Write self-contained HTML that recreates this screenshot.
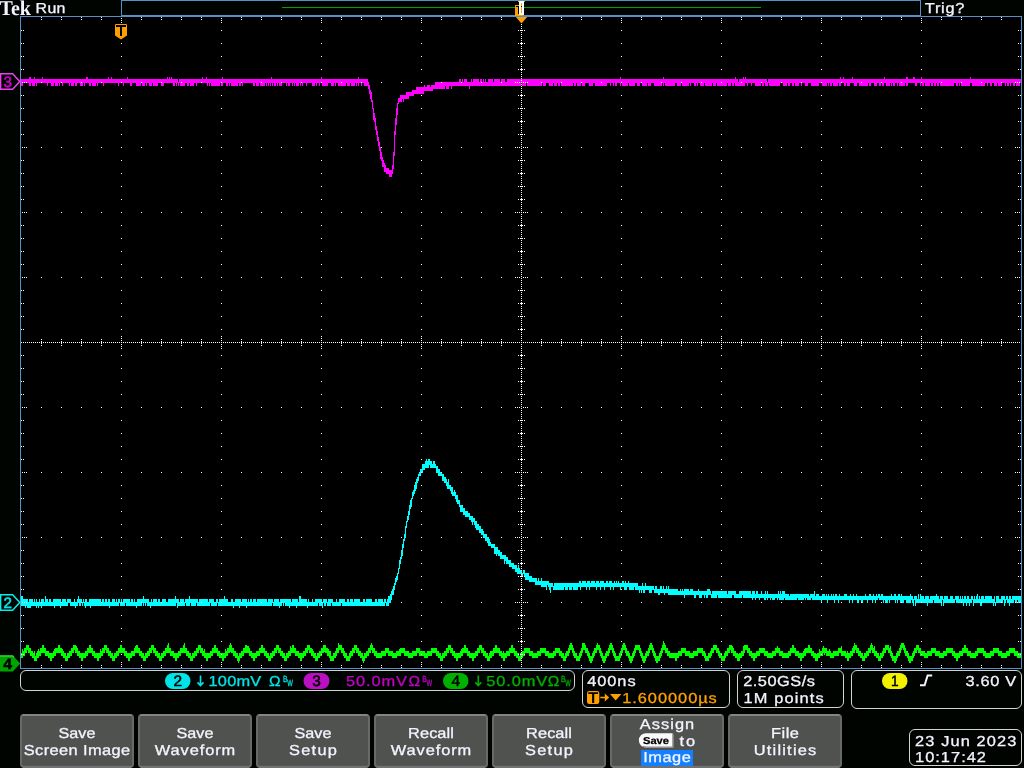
<!DOCTYPE html>
<html><head><meta charset="utf-8"><title>Tek</title>
<style>
html,body{margin:0;padding:0;background:#000400;}
body{width:1024px;height:768px;overflow:hidden;position:relative;font-family:"Liberation Sans",sans-serif;}
</style></head><body>
<svg width="1024" height="768" viewBox="0 0 1024 768" shape-rendering="crispEdges" style="position:absolute;left:0;top:0;will-change:transform"><rect x="20" y="16" width="1002" height="653" fill="#000"/><rect x="121" y="0" width="800" height="16" fill="#000400"/><path d="M21 653h1v5h-1zM22 649h1v9h-1zM23 651h1v5h-1zM24 648h1v8h-1zM25 648h1v5h-1zM26 645h1v8h-1zM27 645h1v5h-1zM28 645h1v8h-1zM29 648h1v5h-1zM30 648h1v8h-1zM31 651h1v5h-1zM32 651h1v7h-1zM33 653h1v5h-1zM34 651h1v10h-1zM35 656h1v5h-1zM36 653h1v8h-1zM37 651h1v7h-1zM38 649h1v9h-1zM39 651h1v5h-1zM40 648h1v8h-1zM41 648h1v5h-1zM42 645h2v8h-2zM44 648h1v5h-1zM45 648h1v8h-1zM46 651h2v5h-2zM48 651h1v7h-1zM49 653h1v5h-1zM50 653h2v8h-2zM52 653h1v5h-1zM53 651h1v7h-1zM54 649h1v7h-1zM55 648h1v8h-1zM56 648h2v5h-2zM58 645h2v8h-2zM60 648h1v5h-1zM61 648h1v8h-1zM62 649h1v7h-1zM63 651h1v7h-1zM64 653h1v5h-1zM65 653h1v8h-1zM66 656h1v5h-1zM67 653h1v8h-1zM68 653h1v5h-1zM69 651h1v7h-1zM70 651h1v5h-1zM71 648h1v8h-1zM72 648h1v5h-1zM73 645h1v8h-1zM74 645h1v5h-1zM75 645h1v8h-1zM76 646h1v7h-1zM77 648h1v8h-1zM78 651h1v5h-1zM79 651h1v7h-1zM80 653h1v5h-1zM81 653h2v8h-2zM83 653h2v5h-2zM85 651h1v7h-1zM86 651h1v5h-1zM87 648h1v8h-1zM88 648h1v5h-1zM89 645h2v8h-2zM91 648h1v5h-1zM92 648h1v8h-1zM93 651h1v5h-1zM94 651h1v7h-1zM95 653h2v5h-2zM97 653h2v8h-2zM99 653h1v5h-1zM100 649h1v9h-1zM101 651h1v5h-1zM102 648h1v8h-1zM103 648h1v5h-1zM104 645h1v8h-1zM105 645h1v5h-1zM106 645h1v8h-1zM107 648h1v5h-1zM108 648h1v8h-1zM109 651h1v5h-1zM110 651h1v7h-1zM111 653h1v5h-1zM112 653h1v8h-1zM113 656h1v5h-1zM114 653h1v8h-1zM115 653h1v5h-1zM116 651h1v7h-1zM117 651h1v5h-1zM118 648h1v8h-1zM119 648h1v5h-1zM120 645h2v8h-2zM122 648h2v5h-2zM124 648h1v8h-1zM125 651h1v5h-1zM126 651h1v7h-1zM127 653h1v5h-1zM128 653h2v8h-2zM130 653h1v5h-1zM131 651h1v7h-1zM132 651h2v5h-2zM134 648h1v8h-1zM135 646h1v7h-1zM136 645h2v8h-2zM138 648h1v5h-1zM139 648h1v8h-1zM140 651h1v5h-1zM141 651h1v7h-1zM142 653h1v5h-1zM143 653h1v8h-1zM144 656h1v5h-1zM145 653h1v8h-1zM146 653h1v5h-1zM147 651h1v7h-1zM148 651h1v5h-1zM149 648h1v8h-1zM150 648h1v5h-1zM151 645h1v8h-1zM152 645h1v5h-1zM153 645h1v8h-1zM154 648h1v5h-1zM155 648h1v8h-1zM156 651h1v5h-1zM157 651h1v7h-1zM158 653h1v5h-1zM159 653h1v8h-1zM160 656h1v5h-1zM161 653h1v8h-1zM162 653h1v5h-1zM163 651h1v7h-1zM164 651h1v5h-1zM165 648h1v8h-1zM166 648h1v5h-1zM167 645h1v8h-1zM168 643h1v10h-1zM169 648h1v5h-1zM170 648h1v8h-1zM171 651h2v5h-2zM173 651h1v7h-1zM174 653h1v5h-1zM175 653h2v8h-2zM177 653h1v5h-1zM178 651h1v7h-1zM179 651h1v5h-1zM180 648h1v8h-1zM181 648h2v5h-2zM183 645h1v8h-1zM184 643h1v10h-1zM185 648h1v5h-1zM186 648h1v8h-1zM187 651h1v5h-1zM188 651h1v7h-1zM189 653h1v5h-1zM190 653h1v8h-1zM191 656h1v5h-1zM192 653h1v8h-1zM193 653h1v5h-1zM194 651h1v7h-1zM195 651h1v5h-1zM196 648h1v8h-1zM197 648h1v5h-1zM198 645h1v8h-1zM199 645h1v5h-1zM200 645h1v8h-1zM201 648h1v5h-1zM202 648h1v8h-1zM203 651h1v5h-1zM204 649h1v9h-1zM205 653h1v5h-1zM206 653h2v8h-2zM208 653h2v5h-2zM210 651h1v7h-1zM211 651h1v5h-1zM212 648h1v8h-1zM213 648h1v5h-1zM214 645h2v8h-2zM216 648h1v5h-1zM217 648h1v8h-1zM218 651h1v5h-1zM219 651h1v7h-1zM220 653h2v5h-2zM222 653h2v8h-2zM224 653h1v5h-1zM225 649h1v9h-1zM226 651h1v5h-1zM227 648h1v8h-1zM228 648h1v5h-1zM229 645h1v8h-1zM230 643h1v9h-1zM231 645h1v8h-1zM232 648h1v5h-1zM233 648h1v8h-1zM234 651h1v5h-1zM235 651h1v7h-1zM236 653h1v5h-1zM237 653h1v8h-1zM238 656h1v7h-1zM239 653h1v8h-1zM240 653h1v5h-1zM241 651h1v7h-1zM242 651h1v5h-1zM243 648h1v8h-1zM244 648h1v5h-1zM245 645h2v8h-2zM247 646h2v7h-2zM249 648h1v8h-1zM250 651h1v5h-1zM251 651h1v7h-1zM252 653h1v5h-1zM253 653h2v8h-2zM255 653h1v5h-1zM256 651h1v7h-1zM257 651h2v5h-2zM259 648h1v8h-1zM260 648h1v5h-1zM261 645h2v8h-2zM263 648h1v5h-1zM264 648h1v8h-1zM265 651h1v5h-1zM266 651h1v7h-1zM267 653h1v5h-1zM268 653h1v8h-1zM269 656h1v5h-1zM270 653h1v8h-1zM271 653h1v5h-1zM272 651h1v7h-1zM273 651h1v5h-1zM274 648h1v8h-1zM275 648h1v5h-1zM276 645h1v8h-1zM277 645h1v5h-1zM278 645h1v8h-1zM279 648h1v5h-1zM280 648h1v8h-1zM281 651h1v5h-1zM282 651h1v7h-1zM283 653h1v5h-1zM284 653h1v8h-1zM285 656h1v5h-1zM286 653h1v8h-1zM287 653h1v5h-1zM288 651h1v7h-1zM289 651h1v5h-1zM290 646h1v10h-1zM291 648h1v5h-1zM292 645h2v8h-2zM294 648h1v5h-1zM295 648h1v8h-1zM296 651h2v5h-2zM298 651h1v7h-1zM299 653h1v5h-1zM300 653h2v8h-2zM302 653h1v5h-1zM303 651h1v7h-1zM304 651h1v5h-1zM305 648h1v8h-1zM306 648h1v5h-1zM307 645h1v8h-1zM308 645h1v5h-1zM309 645h1v8h-1zM310 648h1v5h-1zM311 648h1v8h-1zM312 649h1v7h-1zM313 651h1v7h-1zM314 653h1v5h-1zM315 653h1v8h-1zM316 656h1v5h-1zM317 653h1v8h-1zM318 653h1v5h-1zM319 651h1v7h-1zM320 651h1v5h-1zM321 648h1v8h-1zM322 648h1v5h-1zM323 645h1v8h-1zM324 645h1v7h-1zM325 645h1v8h-1zM326 648h1v5h-1zM327 648h1v8h-1zM328 649h1v7h-1zM329 651h1v7h-1zM330 651h1v10h-1zM331 656h2v5h-2zM333 653h1v8h-1zM334 653h1v5h-1zM335 651h1v7h-1zM336 648h1v8h-1zM337 648h1v5h-1zM338 643h1v10h-1zM339 645h2v5h-2zM341 645h1v8h-1zM342 648h1v5h-1zM343 648h1v8h-1zM344 651h1v7h-1zM345 653h1v5h-1zM346 653h1v8h-1zM347 656h2v5h-2zM349 653h1v8h-1zM350 651h1v7h-1zM351 651h1v5h-1zM352 648h1v8h-1zM353 648h1v5h-1zM354 645h1v8h-1zM355 645h1v5h-1zM356 645h1v8h-1zM357 648h1v5h-1zM358 648h1v8h-1zM359 651h1v5h-1zM360 651h1v7h-1zM361 653h1v5h-1zM362 653h1v8h-1zM363 656h1v7h-1zM364 653h1v8h-1zM365 653h1v5h-1zM366 651h1v7h-1zM367 651h1v5h-1zM368 648h1v8h-1zM369 648h1v5h-1zM370 645h1v8h-1zM371 643h1v7h-1zM372 645h1v8h-1zM373 648h1v5h-1zM374 648h1v8h-1zM375 651h1v5h-1zM376 651h1v7h-1zM377 653h4v5h-4zM381 651h1v7h-1zM382 651h3v5h-3zM385 648h1v8h-1zM386 648h2v5h-2zM388 648h1v8h-1zM389 651h3v5h-3zM392 651h1v7h-1zM393 653h3v5h-3zM396 651h1v7h-1zM397 651h2v5h-2zM399 649h1v7h-1zM400 648h1v8h-1zM401 648h3v5h-3zM404 648h1v8h-1zM405 651h3v5h-3zM408 651h1v7h-1zM409 653h3v5h-3zM412 651h1v7h-1zM413 651h3v5h-3zM416 648h1v8h-1zM417 648h2v5h-2zM419 648h1v8h-1zM420 651h4v5h-4zM424 651h1v7h-1zM425 653h2v5h-2zM427 651h1v7h-1zM428 651h3v5h-3zM431 648h1v8h-1zM432 648h4v5h-4zM436 648h1v8h-1zM437 651h1v5h-1zM438 651h1v7h-1zM439 653h1v5h-1zM440 653h1v8h-1zM441 656h1v5h-1zM442 653h1v8h-1zM443 653h1v5h-1zM444 651h1v7h-1zM445 651h1v5h-1zM446 648h1v8h-1zM447 648h1v5h-1zM448 645h1v8h-1zM449 645h1v5h-1zM450 645h1v8h-1zM451 648h1v5h-1zM452 648h1v8h-1zM453 651h1v5h-1zM454 651h1v7h-1zM455 653h1v5h-1zM456 653h2v8h-2zM458 653h2v5h-2zM460 651h1v7h-1zM461 649h1v7h-1zM462 648h1v8h-1zM463 648h1v5h-1zM464 645h2v8h-2zM466 648h1v5h-1zM467 648h1v8h-1zM468 651h1v5h-1zM469 651h1v7h-1zM470 653h2v5h-2zM472 653h2v8h-2zM474 653h1v5h-1zM475 651h1v7h-1zM476 651h1v5h-1zM477 648h1v8h-1zM478 648h1v5h-1zM479 645h1v8h-1zM480 645h1v5h-1zM481 645h1v8h-1zM482 648h1v5h-1zM483 648h1v8h-1zM484 651h1v5h-1zM485 651h1v7h-1zM486 653h1v5h-1zM487 653h1v8h-1zM488 656h1v5h-1zM489 653h1v8h-1zM490 651h2v7h-2zM492 651h1v5h-1zM493 648h1v8h-1zM494 648h1v5h-1zM495 645h2v8h-2zM497 648h2v5h-2zM499 648h1v8h-1zM500 651h1v5h-1zM501 651h1v7h-1zM502 653h1v5h-1zM503 651h1v10h-1zM504 653h1v8h-1zM505 653h1v5h-1zM506 651h1v7h-1zM507 651h2v5h-2zM509 648h1v8h-1zM510 648h1v5h-1zM511 645h2v8h-2zM513 648h1v5h-1zM514 648h1v8h-1zM515 651h1v5h-1zM516 651h1v7h-1zM517 653h1v5h-1zM518 653h1v8h-1zM519 656h1v5h-1zM520 653h1v8h-1zM521 653h1v5h-1zM522 651h1v7h-1zM523 651h1v5h-1zM524 648h1v8h-1zM525 648h4v5h-4zM529 648h1v8h-1zM530 651h2v5h-2zM532 651h1v7h-1zM533 653h4v5h-4zM537 651h1v7h-1zM538 651h2v5h-2zM540 648h1v8h-1zM541 648h4v5h-4zM545 648h1v8h-1zM546 651h2v5h-2zM548 651h1v7h-1zM549 653h4v5h-4zM553 651h1v7h-1zM554 651h1v5h-1zM555 648h1v8h-1zM556 648h3v5h-3zM559 648h1v8h-1zM560 651h1v5h-1zM561 651h1v7h-1zM562 653h1v5h-1zM563 653h1v8h-1zM564 656h1v5h-1zM565 653h1v8h-1zM566 651h1v7h-1zM567 651h1v5h-1zM568 648h1v8h-1zM569 645h1v8h-1zM570 643h2v7h-2zM572 645h1v8h-1zM573 648h1v8h-1zM574 651h1v7h-1zM575 653h1v5h-1zM576 653h1v8h-1zM577 656h2v5h-2zM579 653h1v8h-1zM580 651h1v7h-1zM581 648h1v8h-1zM582 643h1v10h-1zM583 643h2v7h-2zM585 645h1v8h-1zM586 648h1v5h-1zM587 648h1v8h-1zM588 651h1v7h-1zM589 653h1v8h-1zM590 656h2v7h-2zM592 653h1v8h-1zM593 651h1v7h-1zM594 648h1v8h-1zM595 648h1v5h-1zM596 645h1v8h-1zM597 643h1v7h-1zM598 645h1v5h-1zM599 645h1v8h-1zM600 648h1v8h-1zM601 651h1v7h-1zM602 653h1v8h-1zM603 656h2v7h-2zM605 653h1v8h-1zM606 651h1v7h-1zM607 651h1v5h-1zM608 648h1v8h-1zM609 645h1v8h-1zM610 643h2v7h-2zM612 645h1v8h-1zM613 648h1v8h-1zM614 651h1v7h-1zM615 653h1v8h-1zM616 656h3v5h-3zM619 653h1v8h-1zM620 651h1v7h-1zM621 648h1v8h-1zM622 645h1v8h-1zM623 643h2v7h-2zM625 645h1v8h-1zM626 648h1v8h-1zM627 651h1v5h-1zM628 651h1v7h-1zM629 653h1v8h-1zM630 656h2v7h-2zM632 653h1v8h-1zM633 651h1v7h-1zM634 648h1v8h-1zM635 645h1v8h-1zM636 645h3v5h-3zM639 645h1v8h-1zM640 648h1v8h-1zM641 651h1v7h-1zM642 653h1v8h-1zM643 656h2v7h-2zM645 653h1v8h-1zM646 651h1v7h-1zM647 651h1v5h-1zM648 648h1v8h-1zM649 645h1v8h-1zM650 643h2v7h-2zM652 645h1v8h-1zM653 648h1v8h-1zM654 651h1v7h-1zM655 653h1v8h-1zM656 656h2v7h-2zM658 656h1v5h-1zM659 653h1v8h-1zM660 651h1v7h-1zM661 648h1v8h-1zM662 645h1v8h-1zM663 641h1v9h-1zM664 643h1v7h-1zM665 645h1v8h-1zM666 648h1v5h-1zM667 648h1v8h-1zM668 651h1v5h-1zM669 651h1v7h-1zM670 653h5v5h-5zM675 653h2v8h-2zM677 653h1v5h-1zM678 651h1v7h-1zM679 651h2v5h-2zM681 648h1v8h-1zM682 648h3v5h-3zM685 648h1v8h-1zM686 651h3v5h-3zM689 651h1v7h-1zM690 653h3v5h-3zM693 651h1v7h-1zM694 651h3v5h-3zM697 648h1v8h-1zM698 648h4v5h-4zM702 648h1v8h-1zM703 651h1v5h-1zM704 651h1v7h-1zM705 653h1v8h-1zM706 656h2v5h-2zM708 653h1v8h-1zM709 653h1v5h-1zM710 651h1v7h-1zM711 648h1v8h-1zM712 648h1v5h-1zM713 645h1v8h-1zM714 645h2v5h-2zM716 645h1v8h-1zM717 648h1v5h-1zM718 648h1v8h-1zM719 651h1v7h-1zM720 653h1v5h-1zM721 653h1v8h-1zM722 656h2v5h-2zM724 653h1v8h-1zM725 651h1v7h-1zM726 651h1v5h-1zM727 648h1v8h-1zM728 648h1v5h-1zM729 645h1v8h-1zM730 645h1v5h-1zM731 645h1v8h-1zM732 646h1v7h-1zM733 648h1v8h-1zM734 651h1v5h-1zM735 651h1v7h-1zM736 653h1v5h-1zM737 653h1v8h-1zM738 654h1v7h-1zM739 653h1v8h-1zM740 653h1v5h-1zM741 651h1v7h-1zM742 651h1v5h-1zM743 646h1v10h-1zM744 645h1v8h-1zM745 645h2v5h-2zM747 645h1v8h-1zM748 648h1v5h-1zM749 648h1v8h-1zM750 651h1v5h-1zM751 651h1v7h-1zM752 653h1v5h-1zM753 653h2v8h-2zM755 653h1v5h-1zM756 651h1v7h-1zM757 651h2v5h-2zM759 648h1v8h-1zM760 648h4v5h-4zM764 648h1v8h-1zM765 651h2v5h-2zM767 651h1v7h-1zM768 653h4v5h-4zM772 651h1v7h-1zM773 651h2v5h-2zM775 648h1v8h-1zM776 648h1v5h-1zM777 646h1v7h-1zM778 648h1v5h-1zM779 648h1v8h-1zM780 651h2v5h-2zM782 651h1v7h-1zM783 653h5v5h-5zM788 651h1v7h-1zM789 651h1v5h-1zM790 648h1v8h-1zM791 648h1v5h-1zM792 645h2v8h-2zM794 648h1v5h-1zM795 648h1v8h-1zM796 651h2v5h-2zM798 651h1v7h-1zM799 653h1v5h-1zM800 653h2v8h-2zM802 653h1v5h-1zM803 651h1v7h-1zM804 649h1v7h-1zM805 648h1v8h-1zM806 648h2v5h-2zM808 645h2v8h-2zM810 648h1v5h-1zM811 648h1v8h-1zM812 651h1v5h-1zM813 651h1v7h-1zM814 653h1v5h-1zM815 653h1v8h-1zM816 654h1v7h-1zM817 653h1v8h-1zM818 653h1v5h-1zM819 649h1v9h-1zM820 651h2v5h-2zM822 648h1v8h-1zM823 646h1v7h-1zM824 648h1v7h-1zM825 648h1v5h-1zM826 648h1v8h-1zM827 651h2v5h-2zM829 649h1v7h-1zM830 651h1v7h-1zM831 653h2v5h-2zM833 651h1v7h-1zM834 651h4v5h-4zM838 648h1v8h-1zM839 648h2v5h-2zM841 646h1v10h-1zM842 651h3v5h-3zM845 651h1v7h-1zM846 653h1v5h-1zM847 651h1v10h-1zM848 653h1v8h-1zM849 653h1v5h-1zM850 651h1v7h-1zM851 651h1v5h-1zM852 648h1v8h-1zM853 646h1v7h-1zM854 643h1v10h-1zM855 645h1v5h-1zM856 645h1v8h-1zM857 648h1v5h-1zM858 648h1v8h-1zM859 651h1v5h-1zM860 651h1v7h-1zM861 653h1v5h-1zM862 653h1v8h-1zM863 656h1v5h-1zM864 653h1v8h-1zM865 653h1v5h-1zM866 651h1v7h-1zM867 651h1v5h-1zM868 648h1v8h-1zM869 648h1v5h-1zM870 645h1v8h-1zM871 643h1v7h-1zM872 645h1v8h-1zM873 648h1v5h-1zM874 646h1v10h-1zM875 651h1v5h-1zM876 651h1v7h-1zM877 653h1v5h-1zM878 653h1v8h-1zM879 656h1v5h-1zM880 653h1v8h-1zM881 653h1v5h-1zM882 651h1v7h-1zM883 648h1v8h-1zM884 648h1v5h-1zM885 645h1v8h-1zM886 645h2v5h-2zM888 645h1v8h-1zM889 648h1v5h-1zM890 646h1v10h-1zM891 651h1v7h-1zM892 653h1v8h-1zM893 656h1v5h-1zM894 656h2v7h-2zM896 653h1v8h-1zM897 651h1v7h-1zM898 651h1v5h-1zM899 648h1v8h-1zM900 645h1v8h-1zM901 643h1v7h-1zM902 643h1v5h-1zM903 643h1v7h-1zM904 645h1v8h-1zM905 648h1v8h-1zM906 651h1v5h-1zM907 651h1v7h-1zM908 653h1v8h-1zM909 656h2v7h-2zM911 656h1v5h-1zM912 653h1v8h-1zM913 651h1v7h-1zM914 648h1v8h-1zM915 648h1v5h-1zM916 645h1v8h-1zM917 645h1v5h-1zM918 645h1v8h-1zM919 648h1v5h-1zM920 648h1v8h-1zM921 651h3v5h-3zM924 651h1v7h-1zM925 653h2v5h-2zM927 651h1v7h-1zM928 651h3v5h-3zM931 648h1v8h-1zM932 648h3v5h-3zM935 648h1v8h-1zM936 651h3v5h-3zM939 651h1v7h-1zM940 653h3v5h-3zM943 651h1v7h-1zM944 651h2v5h-2zM946 648h1v8h-1zM947 648h5v5h-5zM952 648h1v8h-1zM953 651h1v5h-1zM954 651h1v7h-1zM955 653h1v5h-1zM956 653h2v8h-2zM958 653h1v5h-1zM959 651h1v7h-1zM960 651h2v5h-2zM962 648h1v8h-1zM963 648h1v5h-1zM964 645h2v8h-2zM966 648h1v5h-1zM967 648h1v8h-1zM968 651h2v5h-2zM970 651h1v7h-1zM971 653h4v5h-4zM975 651h1v7h-1zM976 651h1v5h-1zM977 648h1v8h-1zM978 648h5v5h-5zM983 648h1v8h-1zM984 651h1v5h-1zM985 651h1v7h-1zM986 653h4v5h-4zM990 651h1v7h-1zM991 651h2v5h-2zM993 648h1v8h-1zM994 648h4v5h-4zM998 648h1v8h-1zM999 651h2v5h-2zM1001 651h1v7h-1zM1002 653h4v5h-4zM1006 651h1v7h-1zM1007 651h2v5h-2zM1009 648h1v8h-1zM1010 648h4v5h-4zM1014 648h1v8h-1zM1015 651h2v5h-2zM1017 651h1v7h-1zM1018 653h3v5h-3z" fill="#00ff00"/><path d="M21 596h2v10h-2zM23 599h2v7h-2zM25 599h1v9h-1zM26 599h1v7h-1zM27 599h1v9h-1zM28 602h1v6h-1zM29 599h2v9h-2zM31 599h2v7h-2zM33 602h1v4h-1zM34 599h1v7h-1zM35 602h1v4h-1zM36 599h1v9h-1zM37 602h1v4h-1zM38 602h1v6h-1zM39 599h1v7h-1zM40 602h1v4h-1zM41 599h1v9h-1zM42 599h2v7h-2zM44 602h1v4h-1zM45 596h1v10h-1zM46 599h2v7h-2zM48 602h1v4h-1zM49 599h2v7h-2zM51 602h2v4h-2zM53 599h1v7h-1zM54 599h1v9h-1zM55 599h5v7h-5zM60 599h1v9h-1zM61 602h1v4h-1zM62 599h4v7h-4zM66 602h1v4h-1zM67 599h1v7h-1zM68 599h2v4h-2zM70 599h1v7h-1zM71 602h3v4h-3zM74 599h1v7h-1zM75 602h1v6h-1zM76 602h1v4h-1zM77 599h1v7h-1zM78 596h1v7h-1zM79 599h2v7h-2zM81 599h1v4h-1zM82 602h1v4h-1zM83 599h1v4h-1zM84 602h1v4h-1zM85 599h1v9h-1zM86 599h1v7h-1zM87 602h2v4h-2zM89 599h1v7h-1zM90 599h1v9h-1zM91 599h10v7h-10zM101 602h1v4h-1zM102 599h2v7h-2zM104 602h1v4h-1zM105 599h2v7h-2zM107 602h1v4h-1zM108 599h1v7h-1zM109 599h1v9h-1zM110 602h2v4h-2zM112 599h3v7h-3zM115 602h1v4h-1zM116 599h1v7h-1zM117 602h1v4h-1zM118 599h1v7h-1zM119 599h1v4h-1zM120 602h1v4h-1zM121 599h1v7h-1zM122 602h1v4h-1zM123 599h2v7h-2zM125 599h1v4h-1zM126 599h4v7h-4zM130 602h1v4h-1zM131 599h2v7h-2zM133 602h1v4h-1zM134 599h1v7h-1zM135 602h1v4h-1zM136 602h1v6h-1zM137 599h5v7h-5zM142 599h1v4h-1zM143 596h1v10h-1zM144 599h1v4h-1zM145 599h1v7h-1zM146 599h1v4h-1zM147 599h2v7h-2zM149 602h1v4h-1zM150 602h1v6h-1zM151 599h1v7h-1zM152 602h1v4h-1zM153 599h4v7h-4zM157 602h1v4h-1zM158 599h2v7h-2zM160 602h2v4h-2zM162 599h4v7h-4zM166 602h2v4h-2zM168 599h7v7h-7zM175 596h1v10h-1zM176 599h1v4h-1zM177 599h1v9h-1zM178 599h1v7h-1zM179 602h1v4h-1zM180 599h4v7h-4zM184 602h1v4h-1zM185 599h1v4h-1zM186 599h3v7h-3zM189 596h1v10h-1zM190 599h1v4h-1zM191 599h5v7h-5zM196 599h1v4h-1zM197 599h1v7h-1zM198 602h1v4h-1zM199 599h9v7h-9zM208 602h1v4h-1zM209 599h1v7h-1zM210 599h1v4h-1zM211 599h3v7h-3zM214 602h2v4h-2zM216 599h1v7h-1zM217 599h1v4h-1zM218 602h1v4h-1zM219 599h5v7h-5zM224 596h1v10h-1zM225 599h3v7h-3zM228 602h3v4h-3zM231 599h2v7h-2zM233 602h1v6h-1zM234 602h1v4h-1zM235 599h4v7h-4zM239 599h1v9h-1zM240 599h1v7h-1zM241 602h1v4h-1zM242 599h4v7h-4zM246 599h1v9h-1zM247 602h1v4h-1zM248 599h1v7h-1zM249 602h1v4h-1zM250 599h2v7h-2zM252 602h1v4h-1zM253 599h3v7h-3zM256 602h1v4h-1zM257 599h10v7h-10zM267 602h1v4h-1zM268 599h4v7h-4zM272 599h1v4h-1zM273 602h1v4h-1zM274 599h5v7h-5zM279 602h1v6h-1zM280 599h2v7h-2zM282 599h1v4h-1zM283 599h1v7h-1zM284 599h1v4h-1zM285 599h4v7h-4zM289 599h1v9h-1zM290 599h1v7h-1zM291 602h1v4h-1zM292 599h4v7h-4zM296 599h1v9h-1zM297 599h1v7h-1zM298 602h1v4h-1zM299 596h2v10h-2zM301 599h6v7h-6zM307 602h1v6h-1zM308 599h1v7h-1zM309 602h3v4h-3zM312 599h1v7h-1zM313 602h2v4h-2zM315 599h3v7h-3zM318 599h1v4h-1zM319 599h3v7h-3zM322 602h1v6h-1zM323 599h1v4h-1zM324 599h2v7h-2zM326 599h1v4h-1zM327 602h1v4h-1zM328 599h3v7h-3zM331 599h1v4h-1zM332 599h1v7h-1zM333 602h3v4h-3zM336 599h1v7h-1zM337 602h2v4h-2zM339 599h2v7h-2zM341 599h1v4h-1zM342 599h3v7h-3zM345 602h2v4h-2zM347 599h2v7h-2zM349 602h1v4h-1zM350 599h3v7h-3zM353 602h1v4h-1zM354 599h6v7h-6zM360 602h3v4h-3zM363 599h2v7h-2zM365 602h1v4h-1zM366 599h6v7h-6zM372 602h3v4h-3zM375 599h2v7h-2zM377 602h1v4h-1zM378 599h5v7h-5zM383 602h1v4h-1zM384 599h1v7h-1zM385 599h1v4h-1zM386 602h1v4h-1zM387 599h1v7h-1zM388 596h1v10h-1zM389 596h1v7h-1zM390 594h1v9h-1zM391 591h1v9h-1zM392 589h1v6h-1zM393 586h1v9h-1zM394 583h1v7h-1zM395 578h1v7h-1zM396 576h1v6h-1zM397 573h1v7h-1zM398 568h1v6h-1zM399 560h1v9h-1zM400 557h1v7h-1zM401 550h1v9h-1zM402 544h1v12h-1zM403 539h1v9h-1zM404 534h1v7h-1zM405 526h1v12h-1zM406 521h1v7h-1zM407 516h1v6h-1zM408 511h1v9h-1zM409 505h1v10h-1zM410 500h1v9h-1zM411 498h1v9h-1zM412 492h1v7h-1zM413 490h1v6h-1zM414 485h1v9h-1zM415 482h1v9h-1zM416 479h1v10h-1zM417 477h1v6h-1zM418 474h1v7h-1zM419 472h1v4h-1zM420 469h1v7h-1zM421 469h1v4h-1zM422 464h1v9h-1zM423 464h2v6h-2zM425 461h1v7h-1zM426 459h1v9h-1zM427 461h1v7h-1zM428 459h1v9h-1zM429 459h1v6h-1zM430 461h2v7h-2zM432 464h1v4h-1zM433 461h2v7h-2zM435 464h1v4h-1zM436 466h2v7h-2zM438 469h2v7h-2zM440 472h2v4h-2zM442 474h2v7h-2zM444 477h2v6h-2zM446 479h1v7h-1zM447 482h1v7h-1zM448 479h1v10h-1zM449 485h1v4h-1zM450 485h1v6h-1zM451 487h1v7h-1zM452 487h1v9h-1zM453 492h1v4h-1zM454 490h1v6h-1zM455 492h1v7h-1zM456 495h1v7h-1zM457 495h1v9h-1zM458 500h1v4h-1zM459 500h1v7h-1zM460 505h3v7h-3zM463 508h2v7h-2zM465 511h3v6h-3zM468 513h1v4h-1zM469 513h1v7h-1zM470 516h1v4h-1zM471 516h1v6h-1zM472 516h1v9h-1zM473 518h1v4h-1zM474 518h1v7h-1zM475 521h1v7h-1zM476 521h1v9h-1zM477 524h2v6h-2zM479 526h2v7h-2zM481 529h2v6h-2zM483 531h1v7h-1zM484 534h1v4h-1zM485 534h2v7h-2zM487 537h1v6h-1zM488 537h1v9h-1zM489 539h1v7h-1zM490 542h1v4h-1zM491 544h3v4h-3zM494 544h1v10h-1zM495 547h1v7h-1zM496 547h1v9h-1zM497 547h1v7h-1zM498 550h2v6h-2zM500 552h2v7h-2zM502 555h2v4h-2zM504 555h1v9h-1zM505 555h1v6h-1zM506 557h2v7h-2zM508 560h1v4h-1zM509 560h2v7h-2zM511 563h1v4h-1zM512 563h2v6h-2zM514 565h1v4h-1zM515 565h2v7h-2zM517 568h1v6h-1zM518 565h1v9h-1zM519 568h1v6h-1zM520 570h1v4h-1zM521 570h1v7h-1zM522 573h1v4h-1zM523 570h1v4h-1zM524 570h1v7h-1zM525 573h4v7h-4zM529 576h3v6h-3zM532 578h3v4h-3zM535 578h2v7h-2zM537 581h1v4h-1zM538 578h1v7h-1zM539 581h2v4h-2zM541 578h1v9h-1zM542 581h4v6h-4zM546 581h1v9h-1zM547 581h1v4h-1zM548 581h1v6h-1zM549 583h1v7h-1zM550 583h1v10h-1zM551 583h2v4h-2zM553 586h1v4h-1zM554 583h10v7h-10zM564 583h1v4h-1zM565 583h3v7h-3zM568 583h1v4h-1zM569 583h3v7h-3zM572 583h1v4h-1zM573 583h5v7h-5zM578 583h1v4h-1zM579 581h1v6h-1zM580 581h1v9h-1zM581 583h1v4h-1zM582 581h4v6h-4zM586 583h1v7h-1zM587 581h2v6h-2zM589 581h1v9h-1zM590 583h1v4h-1zM591 581h4v6h-4zM595 583h1v4h-1zM596 581h1v9h-1zM597 581h2v6h-2zM599 583h1v4h-1zM600 581h1v9h-1zM601 581h3v6h-3zM604 583h1v7h-1zM605 583h1v4h-1zM606 581h2v6h-2zM608 583h1v4h-1zM609 581h1v6h-1zM610 581h1v9h-1zM611 581h1v6h-1zM612 583h1v4h-1zM613 583h1v7h-1zM614 581h1v6h-1zM615 583h1v4h-1zM616 581h1v6h-1zM617 583h1v4h-1zM618 581h1v6h-1zM619 583h1v4h-1zM620 583h1v7h-1zM621 583h1v4h-1zM622 581h2v6h-2zM624 583h1v7h-1zM625 581h1v9h-1zM626 583h1v7h-1zM627 583h1v4h-1zM628 581h1v6h-1zM629 583h5v7h-5zM634 583h1v4h-1zM635 583h3v7h-3zM638 586h1v4h-1zM639 586h1v7h-1zM640 586h1v4h-1zM641 586h1v7h-1zM642 583h1v7h-1zM643 586h2v7h-2zM645 583h1v7h-1zM646 586h3v4h-3zM649 586h3v7h-3zM652 586h2v4h-2zM654 589h1v4h-1zM655 586h2v7h-2zM657 589h1v4h-1zM658 589h2v6h-2zM660 586h2v7h-2zM662 589h1v4h-1zM663 586h1v7h-1zM664 589h1v6h-1zM665 589h1v4h-1zM666 586h1v7h-1zM667 589h1v4h-1zM668 586h1v9h-1zM669 589h9v6h-9zM678 591h2v4h-2zM680 589h1v6h-1zM681 591h1v4h-1zM682 589h1v6h-1zM683 591h1v4h-1zM684 589h1v9h-1zM685 589h4v6h-4zM689 591h1v4h-1zM690 589h3v6h-3zM693 591h1v4h-1zM694 591h2v7h-2zM696 591h2v4h-2zM698 589h1v6h-1zM699 591h3v7h-3zM702 591h2v4h-2zM704 591h1v7h-1zM705 591h1v4h-1zM706 591h1v7h-1zM707 589h1v9h-1zM708 589h2v6h-2zM710 591h1v4h-1zM711 594h1v4h-1zM712 591h5v7h-5zM717 591h1v4h-1zM718 591h9v7h-9zM727 594h1v4h-1zM728 591h4v7h-4zM732 591h2v4h-2zM734 591h2v7h-2zM736 594h3v4h-3zM739 591h3v7h-3zM742 591h1v4h-1zM743 591h8v7h-8zM751 594h1v4h-1zM752 591h1v9h-1zM753 591h2v7h-2zM755 594h1v6h-1zM756 591h2v7h-2zM758 594h1v4h-1zM759 594h1v6h-1zM760 594h1v4h-1zM761 591h1v7h-1zM762 594h2v4h-2zM764 594h1v6h-1zM765 591h1v9h-1zM766 594h1v4h-1zM767 591h1v9h-1zM768 594h2v4h-2zM770 594h1v6h-1zM771 594h1v4h-1zM772 594h3v6h-3zM775 594h2v4h-2zM777 594h1v6h-1zM778 591h1v7h-1zM779 594h1v6h-1zM780 591h1v9h-1zM781 594h1v6h-1zM782 591h2v9h-2zM784 591h1v7h-1zM785 594h4v6h-4zM789 596h1v4h-1zM790 594h7v6h-7zM797 594h1v4h-1zM798 594h6v6h-6zM804 594h1v4h-1zM805 594h1v6h-1zM806 594h1v4h-1zM807 594h2v6h-2zM809 596h1v4h-1zM810 594h1v6h-1zM811 594h1v4h-1zM812 594h2v6h-2zM814 591h1v9h-1zM815 596h1v4h-1zM816 594h3v6h-3zM819 596h2v4h-2zM821 596h1v7h-1zM822 594h3v6h-3zM825 596h1v4h-1zM826 594h1v6h-1zM827 596h1v7h-1zM828 594h1v6h-1zM829 596h2v4h-2zM831 594h1v6h-1zM832 596h1v4h-1zM833 594h1v6h-1zM834 596h1v7h-1zM835 594h2v6h-2zM837 596h1v4h-1zM838 596h1v7h-1zM839 594h1v6h-1zM840 596h4v4h-4zM844 594h3v6h-3zM847 596h2v4h-2zM849 596h1v7h-1zM850 594h1v6h-1zM851 596h1v4h-1zM852 596h1v7h-1zM853 594h1v6h-1zM854 596h2v4h-2zM856 594h1v6h-1zM857 596h2v7h-2zM859 596h2v4h-2zM861 596h2v7h-2zM863 596h2v4h-2zM865 594h1v6h-1zM866 596h1v4h-1zM867 596h1v7h-1zM868 596h1v4h-1zM869 594h2v6h-2zM871 596h1v4h-1zM872 596h1v7h-1zM873 594h1v6h-1zM874 596h1v4h-1zM875 596h1v7h-1zM876 594h1v6h-1zM877 596h1v4h-1zM878 594h1v4h-1zM879 594h1v6h-1zM880 596h1v4h-1zM881 594h2v6h-2zM883 596h1v7h-1zM884 596h1v4h-1zM885 596h3v7h-3zM888 596h1v4h-1zM889 596h1v7h-1zM890 596h1v4h-1zM891 594h1v6h-1zM892 596h2v4h-2zM894 594h1v6h-1zM895 594h1v9h-1zM896 596h1v4h-1zM897 596h1v7h-1zM898 594h2v6h-2zM900 596h1v7h-1zM901 594h1v9h-1zM902 596h2v7h-2zM904 596h2v4h-2zM906 596h4v7h-4zM910 594h1v9h-1zM911 596h1v4h-1zM912 596h1v7h-1zM913 599h1v7h-1zM914 596h1v4h-1zM915 596h1v10h-1zM916 596h1v7h-1zM917 599h1v4h-1zM918 594h1v9h-1zM919 599h1v4h-1zM920 594h1v9h-1zM921 596h3v7h-3zM924 599h1v4h-1zM925 596h2v7h-2zM927 596h1v10h-1zM928 596h1v7h-1zM929 599h1v4h-1zM930 596h3v7h-3zM933 596h1v4h-1zM934 596h2v7h-2zM936 594h1v9h-1zM937 596h2v7h-2zM939 599h1v4h-1zM940 596h1v7h-1zM941 596h1v10h-1zM942 596h1v4h-1zM943 599h1v7h-1zM944 596h4v7h-4zM948 599h2v4h-2zM950 596h3v7h-3zM953 599h2v4h-2zM955 596h1v4h-1zM956 596h3v7h-3zM959 599h1v4h-1zM960 596h1v7h-1zM961 599h1v4h-1zM962 596h1v7h-1zM963 599h1v7h-1zM964 596h2v7h-2zM966 599h1v7h-1zM967 596h2v7h-2zM969 599h1v7h-1zM970 599h1v4h-1zM971 596h1v7h-1zM972 596h1v4h-1zM973 599h1v7h-1zM974 596h1v7h-1zM975 599h1v4h-1zM976 596h1v7h-1zM977 594h1v9h-1zM978 599h1v4h-1zM979 596h1v7h-1zM980 599h1v7h-1zM981 596h1v10h-1zM982 596h2v7h-2zM984 599h1v4h-1zM985 596h7v7h-7zM992 599h1v4h-1zM993 599h1v7h-1zM994 596h1v7h-1zM995 602h1v4h-1zM996 596h3v7h-3zM999 599h2v4h-2zM1001 596h2v7h-2zM1003 596h1v4h-1zM1004 596h1v10h-1zM1005 599h1v4h-1zM1006 596h1v4h-1zM1007 596h1v7h-1zM1008 599h1v4h-1zM1009 596h1v10h-1zM1010 596h1v7h-1zM1011 599h1v4h-1zM1012 596h2v7h-2zM1014 596h1v4h-1zM1015 596h2v7h-2zM1017 596h1v4h-1zM1018 596h3v7h-3z" fill="#00ffff"/><path d="M21 79h2v7h-2zM23 79h6v4h-6zM29 77h2v9h-2zM31 79h1v4h-1zM32 79h2v7h-2zM34 77h1v9h-1zM35 79h1v4h-1zM36 79h1v7h-1zM37 79h5v4h-5zM42 77h1v6h-1zM43 79h4v4h-4zM47 79h1v7h-1zM48 79h3v4h-3zM51 79h3v7h-3zM54 79h1v4h-1zM55 79h3v7h-3zM58 79h1v4h-1zM59 79h1v7h-1zM60 79h2v4h-2zM62 79h1v7h-1zM63 79h6v4h-6zM69 79h1v7h-1zM70 79h1v4h-1zM71 79h3v7h-3zM74 79h1v4h-1zM75 79h2v7h-2zM77 79h3v4h-3zM80 79h3v7h-3zM83 79h1v4h-1zM84 79h1v7h-1zM85 79h1v4h-1zM86 77h2v6h-2zM88 79h1v4h-1zM89 79h2v7h-2zM91 79h1v4h-1zM92 79h4v7h-4zM96 79h1v4h-1zM97 79h1v7h-1zM98 79h5v4h-5zM103 79h1v7h-1zM104 79h4v4h-4zM108 77h1v6h-1zM109 79h2v4h-2zM111 77h1v6h-1zM112 79h6v4h-6zM118 79h1v7h-1zM119 79h4v4h-4zM123 79h1v7h-1zM124 79h3v4h-3zM127 77h1v6h-1zM128 79h2v4h-2zM130 79h2v7h-2zM132 79h4v4h-4zM136 79h5v7h-5zM141 79h1v4h-1zM142 79h3v7h-3zM145 79h1v4h-1zM146 79h1v7h-1zM147 79h2v4h-2zM149 79h3v7h-3zM152 79h1v4h-1zM153 79h5v7h-5zM158 79h3v4h-3zM161 79h3v7h-3zM164 79h3v4h-3zM167 77h1v6h-1zM168 79h1v4h-1zM169 77h1v6h-1zM170 79h1v4h-1zM171 77h1v6h-1zM172 79h1v4h-1zM173 79h2v7h-2zM175 79h1v4h-1zM176 79h1v7h-1zM177 79h1v4h-1zM178 82h1v4h-1zM179 79h1v4h-1zM180 79h5v7h-5zM185 79h2v4h-2zM187 79h2v7h-2zM189 79h1v4h-1zM190 79h4v7h-4zM194 79h2v4h-2zM196 79h1v7h-1zM197 79h5v4h-5zM202 77h1v6h-1zM203 79h3v4h-3zM206 77h1v6h-1zM207 79h1v7h-1zM208 79h1v4h-1zM209 79h1v7h-1zM210 79h1v4h-1zM211 79h9v7h-9zM220 79h1v4h-1zM221 79h1v7h-1zM222 77h1v9h-1zM223 79h3v4h-3zM226 79h2v7h-2zM228 79h1v4h-1zM229 79h1v7h-1zM230 79h1v4h-1zM231 79h7v7h-7zM238 79h1v4h-1zM239 79h2v7h-2zM241 79h1v4h-1zM242 79h1v7h-1zM243 79h10v4h-10zM253 79h2v7h-2zM255 79h1v4h-1zM256 79h3v7h-3zM259 79h1v4h-1zM260 79h5v7h-5zM265 79h1v4h-1zM266 79h1v7h-1zM267 79h1v4h-1zM268 79h1v7h-1zM269 79h1v4h-1zM270 79h1v7h-1zM271 77h1v6h-1zM272 79h1v7h-1zM273 79h1v4h-1zM274 79h2v7h-2zM276 79h1v4h-1zM277 79h1v7h-1zM278 79h1v4h-1zM279 79h3v7h-3zM282 79h4v4h-4zM286 79h1v7h-1zM287 79h1v4h-1zM288 79h2v7h-2zM290 79h2v4h-2zM292 79h1v7h-1zM293 79h1v4h-1zM294 79h1v7h-1zM295 79h1v4h-1zM296 79h3v7h-3zM299 79h1v4h-1zM300 79h1v7h-1zM301 79h1v4h-1zM302 79h1v7h-1zM303 79h3v4h-3zM306 79h1v7h-1zM307 79h5v4h-5zM312 79h3v7h-3zM315 79h1v4h-1zM316 79h1v7h-1zM317 79h2v4h-2zM319 79h1v7h-1zM320 79h1v4h-1zM321 77h1v6h-1zM322 79h6v7h-6zM328 79h3v4h-3zM331 79h3v7h-3zM334 79h1v4h-1zM335 79h1v7h-1zM336 79h2v4h-2zM338 79h8v7h-8zM346 79h1v4h-1zM347 79h3v7h-3zM350 79h1v4h-1zM351 79h4v7h-4zM355 79h1v4h-1zM356 79h1v7h-1zM357 79h1v4h-1zM358 77h1v9h-1zM359 79h2v4h-2zM361 79h1v7h-1zM362 79h2v4h-2zM364 79h4v7h-4zM368 82h1v7h-1zM369 85h1v9h-1zM370 90h1v9h-1zM371 92h1v10h-1zM372 100h1v9h-1zM373 108h1v12h-1zM374 113h1v9h-1zM375 118h1v12h-1zM376 126h1v9h-1zM377 131h1v10h-1zM378 137h1v9h-1zM379 142h1v9h-1zM380 147h1v12h-1zM381 152h1v9h-1zM382 157h1v10h-1zM383 160h1v7h-1zM384 163h1v9h-1zM385 165h1v7h-1zM386 168h3v6h-3zM389 170h3v7h-3zM392 165h1v9h-1zM393 152h1v17h-1zM394 131h1v25h-1zM395 118h1v17h-1zM396 108h1v17h-1zM397 103h1v12h-1zM398 98h1v6h-1zM399 98h1v4h-1zM400 95h2v7h-2zM402 95h1v4h-1zM403 95h1v7h-1zM404 95h2v4h-2zM406 92h3v7h-3zM409 92h3v4h-3zM412 90h2v6h-2zM414 90h2v4h-2zM416 87h8v7h-8zM424 85h1v6h-1zM425 87h2v4h-2zM427 85h3v6h-3zM430 87h1v4h-1zM431 85h2v6h-2zM433 85h2v4h-2zM435 82h10v7h-10zM445 82h1v4h-1zM446 82h3v7h-3zM449 82h2v4h-2zM451 82h1v7h-1zM452 82h7v4h-7zM459 79h2v7h-2zM461 82h1v4h-1zM462 79h1v7h-1zM463 82h1v4h-1zM464 79h3v7h-3zM467 82h2v4h-2zM469 82h1v7h-1zM470 82h1v4h-1zM471 79h1v7h-1zM472 82h1v4h-1zM473 79h6v7h-6zM479 82h1v4h-1zM480 79h2v7h-2zM482 82h1v4h-1zM483 79h1v7h-1zM484 82h1v4h-1zM485 79h1v7h-1zM486 82h2v4h-2zM488 79h5v7h-5zM493 82h1v4h-1zM494 79h6v7h-6zM500 82h1v4h-1zM501 79h4v7h-4zM505 82h2v4h-2zM507 79h14v7h-14zM521 79h1v4h-1zM522 79h4v7h-4zM526 79h1v4h-1zM527 79h15v7h-15zM542 79h1v4h-1zM543 79h3v7h-3zM546 79h3v4h-3zM549 79h4v7h-4zM553 79h1v4h-1zM554 79h3v7h-3zM557 79h1v4h-1zM558 79h2v7h-2zM560 79h1v4h-1zM561 79h12v7h-12zM573 79h1v4h-1zM574 79h2v7h-2zM576 79h1v4h-1zM577 79h4v7h-4zM581 79h1v4h-1zM582 79h3v7h-3zM585 79h4v4h-4zM589 79h4v7h-4zM593 79h2v4h-2zM595 79h12v7h-12zM607 79h3v4h-3zM610 79h1v7h-1zM611 79h2v4h-2zM613 79h1v7h-1zM614 79h1v4h-1zM615 79h2v7h-2zM617 79h3v4h-3zM620 77h1v9h-1zM621 79h1v4h-1zM622 79h6v7h-6zM628 79h1v4h-1zM629 79h6v7h-6zM635 79h2v4h-2zM637 79h3v7h-3zM640 79h2v4h-2zM642 79h5v7h-5zM647 79h1v4h-1zM648 79h3v7h-3zM651 79h3v4h-3zM654 79h8v7h-8zM662 79h1v4h-1zM663 77h1v9h-1zM664 79h1v4h-1zM665 79h10v7h-10zM675 79h2v4h-2zM677 79h4v7h-4zM681 79h1v4h-1zM682 79h7v7h-7zM689 79h1v4h-1zM690 79h1v7h-1zM691 79h3v4h-3zM694 79h2v7h-2zM696 79h1v4h-1zM697 79h1v7h-1zM698 79h2v4h-2zM700 79h4v7h-4zM704 79h1v4h-1zM705 79h7v7h-7zM712 79h1v4h-1zM713 79h3v7h-3zM716 79h1v4h-1zM717 79h10v7h-10zM727 79h1v4h-1zM728 79h3v7h-3zM731 79h1v4h-1zM732 79h2v7h-2zM734 79h1v4h-1zM735 77h1v9h-1zM736 79h2v7h-2zM738 82h1v4h-1zM739 79h4v7h-4zM743 77h1v9h-1zM744 79h1v7h-1zM745 77h1v6h-1zM746 79h1v4h-1zM747 79h1v7h-1zM748 79h3v4h-3zM751 79h1v7h-1zM752 79h3v4h-3zM755 79h6v7h-6zM761 79h1v4h-1zM762 79h2v7h-2zM764 79h1v4h-1zM765 79h2v7h-2zM767 82h1v4h-1zM768 79h1v4h-1zM769 79h11v7h-11zM780 79h3v4h-3zM783 79h4v7h-4zM787 79h1v4h-1zM788 79h2v7h-2zM790 79h2v4h-2zM792 79h2v7h-2zM794 79h1v4h-1zM795 79h4v7h-4zM799 79h2v4h-2zM801 79h1v7h-1zM802 79h3v4h-3zM805 79h3v7h-3zM808 79h3v4h-3zM811 79h8v7h-8zM819 79h3v4h-3zM822 79h5v7h-5zM827 79h1v4h-1zM828 79h1v7h-1zM829 79h1v4h-1zM830 79h2v7h-2zM832 79h1v4h-1zM833 79h5v7h-5zM838 79h1v4h-1zM839 79h1v7h-1zM840 77h1v9h-1zM841 79h2v4h-2zM843 77h1v6h-1zM844 79h2v7h-2zM846 79h1v4h-1zM847 79h3v7h-3zM850 79h2v4h-2zM852 77h1v6h-1zM853 79h1v4h-1zM854 79h3v7h-3zM857 79h2v4h-2zM859 79h9v7h-9zM868 79h1v4h-1zM869 79h2v7h-2zM871 79h3v4h-3zM874 79h3v7h-3zM877 79h2v4h-2zM879 79h2v7h-2zM881 79h1v4h-1zM882 79h2v7h-2zM884 77h1v6h-1zM885 79h1v4h-1zM886 79h4v7h-4zM890 79h1v4h-1zM891 79h1v7h-1zM892 79h1v4h-1zM893 79h2v7h-2zM895 79h2v4h-2zM897 79h1v7h-1zM898 79h1v4h-1zM899 79h6v7h-6zM905 79h1v4h-1zM906 77h2v9h-2zM908 79h5v4h-5zM913 77h2v6h-2zM915 79h2v7h-2zM917 79h3v4h-3zM920 79h1v7h-1zM921 77h1v6h-1zM922 79h2v7h-2zM924 79h1v4h-1zM925 79h5v7h-5zM930 79h1v4h-1zM931 79h2v7h-2zM933 79h1v4h-1zM934 79h2v7h-2zM936 79h1v4h-1zM937 79h2v7h-2zM939 79h1v4h-1zM940 79h14v7h-14zM954 79h2v4h-2zM956 79h2v7h-2zM958 79h1v4h-1zM959 79h1v7h-1zM960 79h1v4h-1zM961 79h9v7h-9zM970 77h1v6h-1zM971 79h1v4h-1zM972 79h13v7h-13zM985 79h2v4h-2zM987 79h1v7h-1zM988 79h2v4h-2zM990 79h2v7h-2zM992 79h2v4h-2zM994 79h3v7h-3zM997 79h1v4h-1zM998 79h4v7h-4zM1002 79h3v4h-3zM1005 79h1v7h-1zM1006 79h1v4h-1zM1007 79h2v7h-2zM1009 79h1v4h-1zM1010 79h1v7h-1zM1011 79h2v4h-2zM1013 79h2v7h-2zM1015 79h1v4h-1zM1016 79h4v7h-4zM1020 79h1v4h-1z" fill="#ff00ff"/><path fill="#fff" d="M21 30h1v1h-1zM21 43h1v1h-1zM21 56h1v1h-1zM21 69h1v1h-1zM21 95h1v1h-1zM21 108h1v1h-1zM21 121h1v1h-1zM21 134h1v1h-1zM21 160h1v1h-1zM21 173h1v1h-1zM21 186h1v1h-1zM21 199h1v1h-1zM21 225h1v1h-1zM21 238h1v1h-1zM21 251h1v1h-1zM21 264h1v1h-1zM21 290h1v1h-1zM21 303h1v1h-1zM21 316h1v1h-1zM21 329h1v1h-1zM21 342h1v1h-1zM21 355h1v1h-1zM21 368h1v1h-1zM21 381h1v1h-1zM21 394h1v1h-1zM21 420h1v1h-1zM21 433h1v1h-1zM21 446h1v1h-1zM21 459h1v1h-1zM21 485h1v1h-1zM21 498h1v1h-1zM21 511h1v1h-1zM21 524h1v1h-1zM21 550h1v1h-1zM21 563h1v1h-1zM21 576h1v1h-1zM21 589h1v1h-1zM21 615h1v1h-1zM21 628h1v1h-1zM21 641h1v1h-1zM21 654h1v1h-1zM22 82h1v1h-1zM22 147h1v1h-1zM22 212h1v1h-1zM22 277h1v1h-1zM22 407h1v1h-1zM22 472h1v1h-1zM22 537h1v1h-1zM22 602h1v1h-1zM23 30h1v1h-1zM23 43h1v1h-1zM23 56h1v1h-1zM23 69h1v1h-1zM23 95h1v1h-1zM23 108h1v1h-1zM23 121h1v1h-1zM23 134h1v1h-1zM23 160h1v1h-1zM23 173h1v1h-1zM23 186h1v1h-1zM23 199h1v1h-1zM23 225h1v1h-1zM23 238h1v1h-1zM23 251h1v1h-1zM23 264h1v1h-1zM23 290h1v1h-1zM23 303h1v1h-1zM23 316h1v1h-1zM23 329h1v1h-1zM23 342h1v1h-1zM23 355h1v1h-1zM23 368h1v1h-1zM23 381h1v1h-1zM23 394h1v1h-1zM23 420h1v1h-1zM23 433h1v1h-1zM23 446h1v1h-1zM23 459h1v1h-1zM23 485h1v1h-1zM23 498h1v1h-1zM23 511h1v1h-1zM23 524h1v1h-1zM23 550h1v1h-1zM23 563h1v1h-1zM23 576h1v1h-1zM23 589h1v1h-1zM23 615h1v1h-1zM23 628h1v1h-1zM23 641h1v1h-1zM23 654h1v1h-1zM24 82h1v1h-1zM24 147h1v1h-1zM24 212h1v1h-1zM24 277h1v1h-1zM24 407h1v1h-1zM24 472h1v1h-1zM24 537h1v1h-1zM24 602h1v1h-1zM25 342h1v1h-1zM26 82h1v1h-1zM26 147h1v1h-1zM26 212h1v1h-1zM26 277h1v1h-1zM26 407h1v1h-1zM26 472h1v1h-1zM26 537h1v1h-1zM26 602h1v1h-1zM27 342h1v1h-1zM29 342h1v1h-1zM31 342h1v1h-1zM33 342h1v1h-1zM35 342h1v1h-1zM37 342h1v1h-1zM39 342h1v1h-1zM41 17h1v1h-1zM41 19h1v1h-1zM41 82h1v1h-1zM41 147h1v1h-1zM41 212h1v1h-1zM41 277h1v1h-1zM41 339h1v1h-1zM41 341h1v1h-1zM41 342h1v1h-1zM41 343h1v1h-1zM41 345h1v1h-1zM41 407h1v1h-1zM41 472h1v1h-1zM41 537h1v1h-1zM41 602h1v1h-1zM41 665h1v1h-1zM41 667h1v1h-1zM43 342h1v1h-1zM45 342h1v1h-1zM47 342h1v1h-1zM49 342h1v1h-1zM51 342h1v1h-1zM53 342h1v1h-1zM55 342h1v1h-1zM57 342h1v1h-1zM59 342h1v1h-1zM61 17h1v1h-1zM61 19h1v1h-1zM61 82h1v1h-1zM61 147h1v1h-1zM61 212h1v1h-1zM61 277h1v1h-1zM61 339h1v1h-1zM61 341h1v1h-1zM61 342h1v1h-1zM61 343h1v1h-1zM61 345h1v1h-1zM61 407h1v1h-1zM61 472h1v1h-1zM61 537h1v1h-1zM61 602h1v1h-1zM61 665h1v1h-1zM61 667h1v1h-1zM63 342h1v1h-1zM65 342h1v1h-1zM67 342h1v1h-1zM69 342h1v1h-1zM71 342h1v1h-1zM73 342h1v1h-1zM75 342h1v1h-1zM77 342h1v1h-1zM79 342h1v1h-1zM81 17h1v1h-1zM81 19h1v1h-1zM81 82h1v1h-1zM81 147h1v1h-1zM81 212h1v1h-1zM81 277h1v1h-1zM81 339h1v1h-1zM81 341h1v1h-1zM81 342h1v1h-1zM81 343h1v1h-1zM81 345h1v1h-1zM81 407h1v1h-1zM81 472h1v1h-1zM81 537h1v1h-1zM81 602h1v1h-1zM81 665h1v1h-1zM81 667h1v1h-1zM83 342h1v1h-1zM85 342h1v1h-1zM87 342h1v1h-1zM89 342h1v1h-1zM91 342h1v1h-1zM93 342h1v1h-1zM95 342h1v1h-1zM97 342h1v1h-1zM99 342h1v1h-1zM101 17h1v1h-1zM101 19h1v1h-1zM101 82h1v1h-1zM101 147h1v1h-1zM101 212h1v1h-1zM101 277h1v1h-1zM101 339h1v1h-1zM101 341h1v1h-1zM101 342h1v1h-1zM101 343h1v1h-1zM101 345h1v1h-1zM101 407h1v1h-1zM101 472h1v1h-1zM101 537h1v1h-1zM101 602h1v1h-1zM101 665h1v1h-1zM101 667h1v1h-1zM103 342h1v1h-1zM105 342h1v1h-1zM107 342h1v1h-1zM109 342h1v1h-1zM111 342h1v1h-1zM113 342h1v1h-1zM115 342h1v1h-1zM117 342h1v1h-1zM119 342h1v1h-1zM121 18h1v1h-1zM121 20h1v1h-1zM121 22h1v1h-1zM121 30h1v1h-1zM121 43h1v1h-1zM121 56h1v1h-1zM121 69h1v1h-1zM121 82h1v1h-1zM121 95h1v1h-1zM121 108h1v1h-1zM121 121h1v1h-1zM121 134h1v1h-1zM121 147h1v1h-1zM121 160h1v1h-1zM121 173h1v1h-1zM121 186h1v1h-1zM121 199h1v1h-1zM121 212h1v1h-1zM121 225h1v1h-1zM121 238h1v1h-1zM121 251h1v1h-1zM121 264h1v1h-1zM121 277h1v1h-1zM121 290h1v1h-1zM121 303h1v1h-1zM121 316h1v1h-1zM121 329h1v1h-1zM121 336h1v1h-1zM121 338h1v1h-1zM121 340h1v1h-1zM121 342h1v1h-1zM121 344h1v1h-1zM121 346h1v1h-1zM121 348h1v1h-1zM121 355h1v1h-1zM121 368h1v1h-1zM121 381h1v1h-1zM121 394h1v1h-1zM121 407h1v1h-1zM121 420h1v1h-1zM121 433h1v1h-1zM121 446h1v1h-1zM121 459h1v1h-1zM121 472h1v1h-1zM121 485h1v1h-1zM121 498h1v1h-1zM121 511h1v1h-1zM121 524h1v1h-1zM121 537h1v1h-1zM121 550h1v1h-1zM121 563h1v1h-1zM121 576h1v1h-1zM121 589h1v1h-1zM121 602h1v1h-1zM121 615h1v1h-1zM121 628h1v1h-1zM121 641h1v1h-1zM121 654h1v1h-1zM121 662h1v1h-1zM121 664h1v1h-1zM121 666h1v1h-1zM123 342h1v1h-1zM125 342h1v1h-1zM127 342h1v1h-1zM129 342h1v1h-1zM131 342h1v1h-1zM133 342h1v1h-1zM135 342h1v1h-1zM137 342h1v1h-1zM139 342h1v1h-1zM141 17h1v1h-1zM141 19h1v1h-1zM141 82h1v1h-1zM141 147h1v1h-1zM141 212h1v1h-1zM141 277h1v1h-1zM141 339h1v1h-1zM141 341h1v1h-1zM141 342h1v1h-1zM141 343h1v1h-1zM141 345h1v1h-1zM141 407h1v1h-1zM141 472h1v1h-1zM141 537h1v1h-1zM141 602h1v1h-1zM141 665h1v1h-1zM141 667h1v1h-1zM143 342h1v1h-1zM145 342h1v1h-1zM147 342h1v1h-1zM149 342h1v1h-1zM151 342h1v1h-1zM153 342h1v1h-1zM155 342h1v1h-1zM157 342h1v1h-1zM159 342h1v1h-1zM161 17h1v1h-1zM161 19h1v1h-1zM161 82h1v1h-1zM161 147h1v1h-1zM161 212h1v1h-1zM161 277h1v1h-1zM161 339h1v1h-1zM161 341h1v1h-1zM161 342h1v1h-1zM161 343h1v1h-1zM161 345h1v1h-1zM161 407h1v1h-1zM161 472h1v1h-1zM161 537h1v1h-1zM161 602h1v1h-1zM161 665h1v1h-1zM161 667h1v1h-1zM163 342h1v1h-1zM165 342h1v1h-1zM167 342h1v1h-1zM169 342h1v1h-1zM171 342h1v1h-1zM173 342h1v1h-1zM175 342h1v1h-1zM177 342h1v1h-1zM179 342h1v1h-1zM181 17h1v1h-1zM181 19h1v1h-1zM181 82h1v1h-1zM181 147h1v1h-1zM181 212h1v1h-1zM181 277h1v1h-1zM181 339h1v1h-1zM181 341h1v1h-1zM181 342h1v1h-1zM181 343h1v1h-1zM181 345h1v1h-1zM181 407h1v1h-1zM181 472h1v1h-1zM181 537h1v1h-1zM181 602h1v1h-1zM181 665h1v1h-1zM181 667h1v1h-1zM183 342h1v1h-1zM185 342h1v1h-1zM187 342h1v1h-1zM189 342h1v1h-1zM191 342h1v1h-1zM193 342h1v1h-1zM195 342h1v1h-1zM197 342h1v1h-1zM199 342h1v1h-1zM201 17h1v1h-1zM201 19h1v1h-1zM201 82h1v1h-1zM201 147h1v1h-1zM201 212h1v1h-1zM201 277h1v1h-1zM201 339h1v1h-1zM201 341h1v1h-1zM201 342h1v1h-1zM201 343h1v1h-1zM201 345h1v1h-1zM201 407h1v1h-1zM201 472h1v1h-1zM201 537h1v1h-1zM201 602h1v1h-1zM201 665h1v1h-1zM201 667h1v1h-1zM203 342h1v1h-1zM205 342h1v1h-1zM207 342h1v1h-1zM209 342h1v1h-1zM211 342h1v1h-1zM213 342h1v1h-1zM215 342h1v1h-1zM217 342h1v1h-1zM219 342h1v1h-1zM221 18h1v1h-1zM221 20h1v1h-1zM221 22h1v1h-1zM221 30h1v1h-1zM221 43h1v1h-1zM221 56h1v1h-1zM221 69h1v1h-1zM221 82h1v1h-1zM221 95h1v1h-1zM221 108h1v1h-1zM221 121h1v1h-1zM221 134h1v1h-1zM221 147h1v1h-1zM221 160h1v1h-1zM221 173h1v1h-1zM221 186h1v1h-1zM221 199h1v1h-1zM221 212h1v1h-1zM221 225h1v1h-1zM221 238h1v1h-1zM221 251h1v1h-1zM221 264h1v1h-1zM221 277h1v1h-1zM221 290h1v1h-1zM221 303h1v1h-1zM221 316h1v1h-1zM221 329h1v1h-1zM221 336h1v1h-1zM221 338h1v1h-1zM221 340h1v1h-1zM221 342h1v1h-1zM221 344h1v1h-1zM221 346h1v1h-1zM221 348h1v1h-1zM221 355h1v1h-1zM221 368h1v1h-1zM221 381h1v1h-1zM221 394h1v1h-1zM221 407h1v1h-1zM221 420h1v1h-1zM221 433h1v1h-1zM221 446h1v1h-1zM221 459h1v1h-1zM221 472h1v1h-1zM221 485h1v1h-1zM221 498h1v1h-1zM221 511h1v1h-1zM221 524h1v1h-1zM221 537h1v1h-1zM221 550h1v1h-1zM221 563h1v1h-1zM221 576h1v1h-1zM221 589h1v1h-1zM221 602h1v1h-1zM221 615h1v1h-1zM221 628h1v1h-1zM221 641h1v1h-1zM221 654h1v1h-1zM221 662h1v1h-1zM221 664h1v1h-1zM221 666h1v1h-1zM223 342h1v1h-1zM225 342h1v1h-1zM227 342h1v1h-1zM229 342h1v1h-1zM231 342h1v1h-1zM233 342h1v1h-1zM235 342h1v1h-1zM237 342h1v1h-1zM239 342h1v1h-1zM241 17h1v1h-1zM241 19h1v1h-1zM241 82h1v1h-1zM241 147h1v1h-1zM241 212h1v1h-1zM241 277h1v1h-1zM241 339h1v1h-1zM241 341h1v1h-1zM241 342h1v1h-1zM241 343h1v1h-1zM241 345h1v1h-1zM241 407h1v1h-1zM241 472h1v1h-1zM241 537h1v1h-1zM241 602h1v1h-1zM241 665h1v1h-1zM241 667h1v1h-1zM243 342h1v1h-1zM245 342h1v1h-1zM247 342h1v1h-1zM249 342h1v1h-1zM251 342h1v1h-1zM253 342h1v1h-1zM255 342h1v1h-1zM257 342h1v1h-1zM259 342h1v1h-1zM261 17h1v1h-1zM261 19h1v1h-1zM261 82h1v1h-1zM261 147h1v1h-1zM261 212h1v1h-1zM261 277h1v1h-1zM261 339h1v1h-1zM261 341h1v1h-1zM261 342h1v1h-1zM261 343h1v1h-1zM261 345h1v1h-1zM261 407h1v1h-1zM261 472h1v1h-1zM261 537h1v1h-1zM261 602h1v1h-1zM261 665h1v1h-1zM261 667h1v1h-1zM263 342h1v1h-1zM265 342h1v1h-1zM267 342h1v1h-1zM269 342h1v1h-1zM271 342h1v1h-1zM273 342h1v1h-1zM275 342h1v1h-1zM277 342h1v1h-1zM279 342h1v1h-1zM281 17h1v1h-1zM281 19h1v1h-1zM281 82h1v1h-1zM281 147h1v1h-1zM281 212h1v1h-1zM281 277h1v1h-1zM281 339h1v1h-1zM281 341h1v1h-1zM281 342h1v1h-1zM281 343h1v1h-1zM281 345h1v1h-1zM281 407h1v1h-1zM281 472h1v1h-1zM281 537h1v1h-1zM281 602h1v1h-1zM281 665h1v1h-1zM281 667h1v1h-1zM283 342h1v1h-1zM285 342h1v1h-1zM287 342h1v1h-1zM289 342h1v1h-1zM291 342h1v1h-1zM293 342h1v1h-1zM295 342h1v1h-1zM297 342h1v1h-1zM299 342h1v1h-1zM301 17h1v1h-1zM301 19h1v1h-1zM301 82h1v1h-1zM301 147h1v1h-1zM301 212h1v1h-1zM301 277h1v1h-1zM301 339h1v1h-1zM301 341h1v1h-1zM301 342h1v1h-1zM301 343h1v1h-1zM301 345h1v1h-1zM301 407h1v1h-1zM301 472h1v1h-1zM301 537h1v1h-1zM301 602h1v1h-1zM301 665h1v1h-1zM301 667h1v1h-1zM303 342h1v1h-1zM305 342h1v1h-1zM307 342h1v1h-1zM309 342h1v1h-1zM311 342h1v1h-1zM313 342h1v1h-1zM315 342h1v1h-1zM317 342h1v1h-1zM319 342h1v1h-1zM321 18h1v1h-1zM321 20h1v1h-1zM321 22h1v1h-1zM321 30h1v1h-1zM321 43h1v1h-1zM321 56h1v1h-1zM321 69h1v1h-1zM321 82h1v1h-1zM321 95h1v1h-1zM321 108h1v1h-1zM321 121h1v1h-1zM321 134h1v1h-1zM321 147h1v1h-1zM321 160h1v1h-1zM321 173h1v1h-1zM321 186h1v1h-1zM321 199h1v1h-1zM321 212h1v1h-1zM321 225h1v1h-1zM321 238h1v1h-1zM321 251h1v1h-1zM321 264h1v1h-1zM321 277h1v1h-1zM321 290h1v1h-1zM321 303h1v1h-1zM321 316h1v1h-1zM321 329h1v1h-1zM321 336h1v1h-1zM321 338h1v1h-1zM321 340h1v1h-1zM321 342h1v1h-1zM321 344h1v1h-1zM321 346h1v1h-1zM321 348h1v1h-1zM321 355h1v1h-1zM321 368h1v1h-1zM321 381h1v1h-1zM321 394h1v1h-1zM321 407h1v1h-1zM321 420h1v1h-1zM321 433h1v1h-1zM321 446h1v1h-1zM321 459h1v1h-1zM321 472h1v1h-1zM321 485h1v1h-1zM321 498h1v1h-1zM321 511h1v1h-1zM321 524h1v1h-1zM321 537h1v1h-1zM321 550h1v1h-1zM321 563h1v1h-1zM321 576h1v1h-1zM321 589h1v1h-1zM321 602h1v1h-1zM321 615h1v1h-1zM321 628h1v1h-1zM321 641h1v1h-1zM321 654h1v1h-1zM321 662h1v1h-1zM321 664h1v1h-1zM321 666h1v1h-1zM323 342h1v1h-1zM325 342h1v1h-1zM327 342h1v1h-1zM329 342h1v1h-1zM331 342h1v1h-1zM333 342h1v1h-1zM335 342h1v1h-1zM337 342h1v1h-1zM339 342h1v1h-1zM341 17h1v1h-1zM341 19h1v1h-1zM341 82h1v1h-1zM341 147h1v1h-1zM341 212h1v1h-1zM341 277h1v1h-1zM341 339h1v1h-1zM341 341h1v1h-1zM341 342h1v1h-1zM341 343h1v1h-1zM341 345h1v1h-1zM341 407h1v1h-1zM341 472h1v1h-1zM341 537h1v1h-1zM341 602h1v1h-1zM341 665h1v1h-1zM341 667h1v1h-1zM343 342h1v1h-1zM345 342h1v1h-1zM347 342h1v1h-1zM349 342h1v1h-1zM351 342h1v1h-1zM353 342h1v1h-1zM355 342h1v1h-1zM357 342h1v1h-1zM359 342h1v1h-1zM361 17h1v1h-1zM361 19h1v1h-1zM361 82h1v1h-1zM361 147h1v1h-1zM361 212h1v1h-1zM361 277h1v1h-1zM361 339h1v1h-1zM361 341h1v1h-1zM361 342h1v1h-1zM361 343h1v1h-1zM361 345h1v1h-1zM361 407h1v1h-1zM361 472h1v1h-1zM361 537h1v1h-1zM361 602h1v1h-1zM361 665h1v1h-1zM361 667h1v1h-1zM363 342h1v1h-1zM365 342h1v1h-1zM367 342h1v1h-1zM369 342h1v1h-1zM371 342h1v1h-1zM373 342h1v1h-1zM375 342h1v1h-1zM377 342h1v1h-1zM379 342h1v1h-1zM381 17h1v1h-1zM381 19h1v1h-1zM381 82h1v1h-1zM381 147h1v1h-1zM381 212h1v1h-1zM381 277h1v1h-1zM381 339h1v1h-1zM381 341h1v1h-1zM381 342h1v1h-1zM381 343h1v1h-1zM381 345h1v1h-1zM381 407h1v1h-1zM381 472h1v1h-1zM381 537h1v1h-1zM381 602h1v1h-1zM381 665h1v1h-1zM381 667h1v1h-1zM383 342h1v1h-1zM385 342h1v1h-1zM387 342h1v1h-1zM389 342h1v1h-1zM391 342h1v1h-1zM393 342h1v1h-1zM395 342h1v1h-1zM397 342h1v1h-1zM399 342h1v1h-1zM401 17h1v1h-1zM401 19h1v1h-1zM401 82h1v1h-1zM401 147h1v1h-1zM401 212h1v1h-1zM401 277h1v1h-1zM401 339h1v1h-1zM401 341h1v1h-1zM401 342h1v1h-1zM401 343h1v1h-1zM401 345h1v1h-1zM401 407h1v1h-1zM401 472h1v1h-1zM401 537h1v1h-1zM401 602h1v1h-1zM401 665h1v1h-1zM401 667h1v1h-1zM403 342h1v1h-1zM405 342h1v1h-1zM407 342h1v1h-1zM409 342h1v1h-1zM411 342h1v1h-1zM413 342h1v1h-1zM415 342h1v1h-1zM417 342h1v1h-1zM419 342h1v1h-1zM421 18h1v1h-1zM421 20h1v1h-1zM421 22h1v1h-1zM421 30h1v1h-1zM421 43h1v1h-1zM421 56h1v1h-1zM421 69h1v1h-1zM421 82h1v1h-1zM421 95h1v1h-1zM421 108h1v1h-1zM421 121h1v1h-1zM421 134h1v1h-1zM421 147h1v1h-1zM421 160h1v1h-1zM421 173h1v1h-1zM421 186h1v1h-1zM421 199h1v1h-1zM421 212h1v1h-1zM421 225h1v1h-1zM421 238h1v1h-1zM421 251h1v1h-1zM421 264h1v1h-1zM421 277h1v1h-1zM421 290h1v1h-1zM421 303h1v1h-1zM421 316h1v1h-1zM421 329h1v1h-1zM421 336h1v1h-1zM421 338h1v1h-1zM421 340h1v1h-1zM421 342h1v1h-1zM421 344h1v1h-1zM421 346h1v1h-1zM421 348h1v1h-1zM421 355h1v1h-1zM421 368h1v1h-1zM421 381h1v1h-1zM421 394h1v1h-1zM421 407h1v1h-1zM421 420h1v1h-1zM421 433h1v1h-1zM421 446h1v1h-1zM421 459h1v1h-1zM421 472h1v1h-1zM421 485h1v1h-1zM421 498h1v1h-1zM421 511h1v1h-1zM421 524h1v1h-1zM421 537h1v1h-1zM421 550h1v1h-1zM421 563h1v1h-1zM421 576h1v1h-1zM421 589h1v1h-1zM421 602h1v1h-1zM421 615h1v1h-1zM421 628h1v1h-1zM421 641h1v1h-1zM421 654h1v1h-1zM421 662h1v1h-1zM421 664h1v1h-1zM421 666h1v1h-1zM423 342h1v1h-1zM425 342h1v1h-1zM427 342h1v1h-1zM429 342h1v1h-1zM431 342h1v1h-1zM433 342h1v1h-1zM435 342h1v1h-1zM437 342h1v1h-1zM439 342h1v1h-1zM441 17h1v1h-1zM441 19h1v1h-1zM441 82h1v1h-1zM441 147h1v1h-1zM441 212h1v1h-1zM441 277h1v1h-1zM441 339h1v1h-1zM441 341h1v1h-1zM441 342h1v1h-1zM441 343h1v1h-1zM441 345h1v1h-1zM441 407h1v1h-1zM441 472h1v1h-1zM441 537h1v1h-1zM441 602h1v1h-1zM441 665h1v1h-1zM441 667h1v1h-1zM443 342h1v1h-1zM445 342h1v1h-1zM447 342h1v1h-1zM449 342h1v1h-1zM451 342h1v1h-1zM453 342h1v1h-1zM455 342h1v1h-1zM457 342h1v1h-1zM459 342h1v1h-1zM461 17h1v1h-1zM461 19h1v1h-1zM461 82h1v1h-1zM461 147h1v1h-1zM461 212h1v1h-1zM461 277h1v1h-1zM461 339h1v1h-1zM461 341h1v1h-1zM461 342h1v1h-1zM461 343h1v1h-1zM461 345h1v1h-1zM461 407h1v1h-1zM461 472h1v1h-1zM461 537h1v1h-1zM461 602h1v1h-1zM461 665h1v1h-1zM461 667h1v1h-1zM463 342h1v1h-1zM465 342h1v1h-1zM467 342h1v1h-1zM469 342h1v1h-1zM471 342h1v1h-1zM473 342h1v1h-1zM475 342h1v1h-1zM477 342h1v1h-1zM479 342h1v1h-1zM481 17h1v1h-1zM481 19h1v1h-1zM481 82h1v1h-1zM481 147h1v1h-1zM481 212h1v1h-1zM481 277h1v1h-1zM481 339h1v1h-1zM481 341h1v1h-1zM481 342h1v1h-1zM481 343h1v1h-1zM481 345h1v1h-1zM481 407h1v1h-1zM481 472h1v1h-1zM481 537h1v1h-1zM481 602h1v1h-1zM481 665h1v1h-1zM481 667h1v1h-1zM483 342h1v1h-1zM485 342h1v1h-1zM487 342h1v1h-1zM489 342h1v1h-1zM491 342h1v1h-1zM493 342h1v1h-1zM495 342h1v1h-1zM497 342h1v1h-1zM499 342h1v1h-1zM501 17h1v1h-1zM501 19h1v1h-1zM501 82h1v1h-1zM501 147h1v1h-1zM501 212h1v1h-1zM501 277h1v1h-1zM501 339h1v1h-1zM501 341h1v1h-1zM501 342h1v1h-1zM501 343h1v1h-1zM501 345h1v1h-1zM501 407h1v1h-1zM501 472h1v1h-1zM501 537h1v1h-1zM501 602h1v1h-1zM501 665h1v1h-1zM501 667h1v1h-1zM503 342h1v1h-1zM505 342h1v1h-1zM507 342h1v1h-1zM509 342h1v1h-1zM511 342h1v1h-1zM513 342h1v1h-1zM515 82h1v1h-1zM515 147h1v1h-1zM515 212h1v1h-1zM515 277h1v1h-1zM515 342h1v1h-1zM515 407h1v1h-1zM515 472h1v1h-1zM515 537h1v1h-1zM515 602h1v1h-1zM517 82h1v1h-1zM517 147h1v1h-1zM517 212h1v1h-1zM517 277h1v1h-1zM517 342h1v1h-1zM517 407h1v1h-1zM517 472h1v1h-1zM517 537h1v1h-1zM517 602h1v1h-1zM518 30h1v1h-1zM518 43h1v1h-1zM518 56h1v1h-1zM518 69h1v1h-1zM518 95h1v1h-1zM518 108h1v1h-1zM518 121h1v1h-1zM518 134h1v1h-1zM518 160h1v1h-1zM518 173h1v1h-1zM518 186h1v1h-1zM518 199h1v1h-1zM518 225h1v1h-1zM518 238h1v1h-1zM518 251h1v1h-1zM518 264h1v1h-1zM518 290h1v1h-1zM518 303h1v1h-1zM518 316h1v1h-1zM518 329h1v1h-1zM518 355h1v1h-1zM518 368h1v1h-1zM518 381h1v1h-1zM518 394h1v1h-1zM518 420h1v1h-1zM518 433h1v1h-1zM518 446h1v1h-1zM518 459h1v1h-1zM518 485h1v1h-1zM518 498h1v1h-1zM518 511h1v1h-1zM518 524h1v1h-1zM518 550h1v1h-1zM518 563h1v1h-1zM518 576h1v1h-1zM518 589h1v1h-1zM518 615h1v1h-1zM518 628h1v1h-1zM518 641h1v1h-1zM518 654h1v1h-1zM519 82h1v1h-1zM519 147h1v1h-1zM519 212h1v1h-1zM519 277h1v1h-1zM519 342h1v1h-1zM519 407h1v1h-1zM519 472h1v1h-1zM519 537h1v1h-1zM519 602h1v1h-1zM520 30h1v1h-1zM520 43h1v1h-1zM520 56h1v1h-1zM520 69h1v1h-1zM520 95h1v1h-1zM520 108h1v1h-1zM520 121h1v1h-1zM520 134h1v1h-1zM520 160h1v1h-1zM520 173h1v1h-1zM520 186h1v1h-1zM520 199h1v1h-1zM520 225h1v1h-1zM520 238h1v1h-1zM520 251h1v1h-1zM520 264h1v1h-1zM520 290h1v1h-1zM520 303h1v1h-1zM520 316h1v1h-1zM520 329h1v1h-1zM520 355h1v1h-1zM520 368h1v1h-1zM520 381h1v1h-1zM520 394h1v1h-1zM520 420h1v1h-1zM520 433h1v1h-1zM520 446h1v1h-1zM520 459h1v1h-1zM520 485h1v1h-1zM520 498h1v1h-1zM520 511h1v1h-1zM520 524h1v1h-1zM520 550h1v1h-1zM520 563h1v1h-1zM520 576h1v1h-1zM520 589h1v1h-1zM520 615h1v1h-1zM520 628h1v1h-1zM520 641h1v1h-1zM520 654h1v1h-1zM521 18h1v1h-1zM521 20h1v1h-1zM521 22h1v1h-1zM521 24h1v1h-1zM521 26h1v1h-1zM521 28h1v1h-1zM521 30h1v1h-1zM521 32h1v1h-1zM521 34h1v1h-1zM521 36h1v1h-1zM521 38h1v1h-1zM521 40h1v1h-1zM521 42h1v1h-1zM521 43h1v1h-1zM521 44h1v1h-1zM521 46h1v1h-1zM521 48h1v1h-1zM521 50h1v1h-1zM521 52h1v1h-1zM521 54h1v1h-1zM521 56h1v1h-1zM521 58h1v1h-1zM521 60h1v1h-1zM521 62h1v1h-1zM521 64h1v1h-1zM521 66h1v1h-1zM521 68h1v1h-1zM521 69h1v1h-1zM521 70h1v1h-1zM521 72h1v1h-1zM521 74h1v1h-1zM521 76h1v1h-1zM521 78h1v1h-1zM521 80h1v1h-1zM521 82h1v1h-1zM521 84h1v1h-1zM521 86h1v1h-1zM521 88h1v1h-1zM521 90h1v1h-1zM521 92h1v1h-1zM521 94h1v1h-1zM521 95h1v1h-1zM521 96h1v1h-1zM521 98h1v1h-1zM521 100h1v1h-1zM521 102h1v1h-1zM521 104h1v1h-1zM521 106h1v1h-1zM521 108h1v1h-1zM521 110h1v1h-1zM521 112h1v1h-1zM521 114h1v1h-1zM521 116h1v1h-1zM521 118h1v1h-1zM521 120h1v1h-1zM521 121h1v1h-1zM521 122h1v1h-1zM521 124h1v1h-1zM521 126h1v1h-1zM521 128h1v1h-1zM521 130h1v1h-1zM521 132h1v1h-1zM521 134h1v1h-1zM521 136h1v1h-1zM521 138h1v1h-1zM521 140h1v1h-1zM521 142h1v1h-1zM521 144h1v1h-1zM521 146h1v1h-1zM521 148h1v1h-1zM521 150h1v1h-1zM521 152h1v1h-1zM521 154h1v1h-1zM521 156h1v1h-1zM521 158h1v1h-1zM521 160h1v1h-1zM521 162h1v1h-1zM521 164h1v1h-1zM521 166h1v1h-1zM521 168h1v1h-1zM521 170h1v1h-1zM521 172h1v1h-1zM521 173h1v1h-1zM521 174h1v1h-1zM521 176h1v1h-1zM521 178h1v1h-1zM521 180h1v1h-1zM521 182h1v1h-1zM521 184h1v1h-1zM521 186h1v1h-1zM521 188h1v1h-1zM521 190h1v1h-1zM521 192h1v1h-1zM521 194h1v1h-1zM521 196h1v1h-1zM521 198h1v1h-1zM521 199h1v1h-1zM521 200h1v1h-1zM521 202h1v1h-1zM521 204h1v1h-1zM521 206h1v1h-1zM521 208h1v1h-1zM521 210h1v1h-1zM521 212h1v1h-1zM521 214h1v1h-1zM521 216h1v1h-1zM521 218h1v1h-1zM521 220h1v1h-1zM521 222h1v1h-1zM521 224h1v1h-1zM521 225h1v1h-1zM521 226h1v1h-1zM521 228h1v1h-1zM521 230h1v1h-1zM521 232h1v1h-1zM521 234h1v1h-1zM521 236h1v1h-1zM521 238h1v1h-1zM521 240h1v1h-1zM521 242h1v1h-1zM521 244h1v1h-1zM521 246h1v1h-1zM521 248h1v1h-1zM521 250h1v1h-1zM521 251h1v1h-1zM521 252h1v1h-1zM521 254h1v1h-1zM521 256h1v1h-1zM521 258h1v1h-1zM521 260h1v1h-1zM521 262h1v1h-1zM521 264h1v1h-1zM521 266h1v1h-1zM521 268h1v1h-1zM521 270h1v1h-1zM521 272h1v1h-1zM521 274h1v1h-1zM521 276h1v1h-1zM521 278h1v1h-1zM521 280h1v1h-1zM521 282h1v1h-1zM521 284h1v1h-1zM521 286h1v1h-1zM521 288h1v1h-1zM521 290h1v1h-1zM521 292h1v1h-1zM521 294h1v1h-1zM521 296h1v1h-1zM521 298h1v1h-1zM521 300h1v1h-1zM521 302h1v1h-1zM521 303h1v1h-1zM521 304h1v1h-1zM521 306h1v1h-1zM521 308h1v1h-1zM521 310h1v1h-1zM521 312h1v1h-1zM521 314h1v1h-1zM521 316h1v1h-1zM521 318h1v1h-1zM521 320h1v1h-1zM521 322h1v1h-1zM521 324h1v1h-1zM521 326h1v1h-1zM521 328h1v1h-1zM521 329h1v1h-1zM521 330h1v1h-1zM521 332h1v1h-1zM521 334h1v1h-1zM521 336h1v1h-1zM521 338h1v1h-1zM521 340h1v1h-1zM521 342h1v1h-1zM521 344h1v1h-1zM521 346h1v1h-1zM521 348h1v1h-1zM521 350h1v1h-1zM521 352h1v1h-1zM521 354h1v1h-1zM521 355h1v1h-1zM521 356h1v1h-1zM521 358h1v1h-1zM521 360h1v1h-1zM521 362h1v1h-1zM521 364h1v1h-1zM521 366h1v1h-1zM521 368h1v1h-1zM521 370h1v1h-1zM521 372h1v1h-1zM521 374h1v1h-1zM521 376h1v1h-1zM521 378h1v1h-1zM521 380h1v1h-1zM521 381h1v1h-1zM521 382h1v1h-1zM521 384h1v1h-1zM521 386h1v1h-1zM521 388h1v1h-1zM521 390h1v1h-1zM521 392h1v1h-1zM521 394h1v1h-1zM521 396h1v1h-1zM521 398h1v1h-1zM521 400h1v1h-1zM521 402h1v1h-1zM521 404h1v1h-1zM521 406h1v1h-1zM521 408h1v1h-1zM521 410h1v1h-1zM521 412h1v1h-1zM521 414h1v1h-1zM521 416h1v1h-1zM521 418h1v1h-1zM521 420h1v1h-1zM521 422h1v1h-1zM521 424h1v1h-1zM521 426h1v1h-1zM521 428h1v1h-1zM521 430h1v1h-1zM521 432h1v1h-1zM521 433h1v1h-1zM521 434h1v1h-1zM521 436h1v1h-1zM521 438h1v1h-1zM521 440h1v1h-1zM521 442h1v1h-1zM521 444h1v1h-1zM521 446h1v1h-1zM521 448h1v1h-1zM521 450h1v1h-1zM521 452h1v1h-1zM521 454h1v1h-1zM521 456h1v1h-1zM521 458h1v1h-1zM521 459h1v1h-1zM521 460h1v1h-1zM521 462h1v1h-1zM521 464h1v1h-1zM521 466h1v1h-1zM521 468h1v1h-1zM521 470h1v1h-1zM521 472h1v1h-1zM521 474h1v1h-1zM521 476h1v1h-1zM521 478h1v1h-1zM521 480h1v1h-1zM521 482h1v1h-1zM521 484h1v1h-1zM521 485h1v1h-1zM521 486h1v1h-1zM521 488h1v1h-1zM521 490h1v1h-1zM521 492h1v1h-1zM521 494h1v1h-1zM521 496h1v1h-1zM521 498h1v1h-1zM521 500h1v1h-1zM521 502h1v1h-1zM521 504h1v1h-1zM521 506h1v1h-1zM521 508h1v1h-1zM521 510h1v1h-1zM521 511h1v1h-1zM521 512h1v1h-1zM521 514h1v1h-1zM521 516h1v1h-1zM521 518h1v1h-1zM521 520h1v1h-1zM521 522h1v1h-1zM521 524h1v1h-1zM521 526h1v1h-1zM521 528h1v1h-1zM521 530h1v1h-1zM521 532h1v1h-1zM521 534h1v1h-1zM521 536h1v1h-1zM521 538h1v1h-1zM521 540h1v1h-1zM521 542h1v1h-1zM521 544h1v1h-1zM521 546h1v1h-1zM521 548h1v1h-1zM521 550h1v1h-1zM521 552h1v1h-1zM521 554h1v1h-1zM521 556h1v1h-1zM521 558h1v1h-1zM521 560h1v1h-1zM521 562h1v1h-1zM521 563h1v1h-1zM521 564h1v1h-1zM521 566h1v1h-1zM521 568h1v1h-1zM521 570h1v1h-1zM521 572h1v1h-1zM521 574h1v1h-1zM521 576h1v1h-1zM521 578h1v1h-1zM521 580h1v1h-1zM521 582h1v1h-1zM521 584h1v1h-1zM521 586h1v1h-1zM521 588h1v1h-1zM521 589h1v1h-1zM521 590h1v1h-1zM521 592h1v1h-1zM521 594h1v1h-1zM521 596h1v1h-1zM521 598h1v1h-1zM521 600h1v1h-1zM521 602h1v1h-1zM521 604h1v1h-1zM521 606h1v1h-1zM521 608h1v1h-1zM521 610h1v1h-1zM521 612h1v1h-1zM521 614h1v1h-1zM521 615h1v1h-1zM521 616h1v1h-1zM521 618h1v1h-1zM521 620h1v1h-1zM521 622h1v1h-1zM521 624h1v1h-1zM521 626h1v1h-1zM521 628h1v1h-1zM521 630h1v1h-1zM521 632h1v1h-1zM521 634h1v1h-1zM521 636h1v1h-1zM521 638h1v1h-1zM521 640h1v1h-1zM521 641h1v1h-1zM521 642h1v1h-1zM521 644h1v1h-1zM521 646h1v1h-1zM521 648h1v1h-1zM521 650h1v1h-1zM521 652h1v1h-1zM521 654h1v1h-1zM521 656h1v1h-1zM521 658h1v1h-1zM521 660h1v1h-1zM521 662h1v1h-1zM521 664h1v1h-1zM521 666h1v1h-1zM522 30h1v1h-1zM522 43h1v1h-1zM522 56h1v1h-1zM522 69h1v1h-1zM522 95h1v1h-1zM522 108h1v1h-1zM522 121h1v1h-1zM522 134h1v1h-1zM522 160h1v1h-1zM522 173h1v1h-1zM522 186h1v1h-1zM522 199h1v1h-1zM522 225h1v1h-1zM522 238h1v1h-1zM522 251h1v1h-1zM522 264h1v1h-1zM522 290h1v1h-1zM522 303h1v1h-1zM522 316h1v1h-1zM522 329h1v1h-1zM522 355h1v1h-1zM522 368h1v1h-1zM522 381h1v1h-1zM522 394h1v1h-1zM522 420h1v1h-1zM522 433h1v1h-1zM522 446h1v1h-1zM522 459h1v1h-1zM522 485h1v1h-1zM522 498h1v1h-1zM522 511h1v1h-1zM522 524h1v1h-1zM522 550h1v1h-1zM522 563h1v1h-1zM522 576h1v1h-1zM522 589h1v1h-1zM522 615h1v1h-1zM522 628h1v1h-1zM522 641h1v1h-1zM522 654h1v1h-1zM523 82h1v1h-1zM523 147h1v1h-1zM523 212h1v1h-1zM523 277h1v1h-1zM523 342h1v1h-1zM523 407h1v1h-1zM523 472h1v1h-1zM523 537h1v1h-1zM523 602h1v1h-1zM524 30h1v1h-1zM524 43h1v1h-1zM524 56h1v1h-1zM524 69h1v1h-1zM524 95h1v1h-1zM524 108h1v1h-1zM524 121h1v1h-1zM524 134h1v1h-1zM524 160h1v1h-1zM524 173h1v1h-1zM524 186h1v1h-1zM524 199h1v1h-1zM524 225h1v1h-1zM524 238h1v1h-1zM524 251h1v1h-1zM524 264h1v1h-1zM524 290h1v1h-1zM524 303h1v1h-1zM524 316h1v1h-1zM524 329h1v1h-1zM524 355h1v1h-1zM524 368h1v1h-1zM524 381h1v1h-1zM524 394h1v1h-1zM524 420h1v1h-1zM524 433h1v1h-1zM524 446h1v1h-1zM524 459h1v1h-1zM524 485h1v1h-1zM524 498h1v1h-1zM524 511h1v1h-1zM524 524h1v1h-1zM524 550h1v1h-1zM524 563h1v1h-1zM524 576h1v1h-1zM524 589h1v1h-1zM524 615h1v1h-1zM524 628h1v1h-1zM524 641h1v1h-1zM524 654h1v1h-1zM525 82h1v1h-1zM525 147h1v1h-1zM525 212h1v1h-1zM525 277h1v1h-1zM525 342h1v1h-1zM525 407h1v1h-1zM525 472h1v1h-1zM525 537h1v1h-1zM525 602h1v1h-1zM527 82h1v1h-1zM527 147h1v1h-1zM527 212h1v1h-1zM527 277h1v1h-1zM527 342h1v1h-1zM527 407h1v1h-1zM527 472h1v1h-1zM527 537h1v1h-1zM527 602h1v1h-1zM529 342h1v1h-1zM531 342h1v1h-1zM533 342h1v1h-1zM535 342h1v1h-1zM537 342h1v1h-1zM539 342h1v1h-1zM541 17h1v1h-1zM541 19h1v1h-1zM541 82h1v1h-1zM541 147h1v1h-1zM541 212h1v1h-1zM541 277h1v1h-1zM541 339h1v1h-1zM541 341h1v1h-1zM541 342h1v1h-1zM541 343h1v1h-1zM541 345h1v1h-1zM541 407h1v1h-1zM541 472h1v1h-1zM541 537h1v1h-1zM541 602h1v1h-1zM541 665h1v1h-1zM541 667h1v1h-1zM543 342h1v1h-1zM545 342h1v1h-1zM547 342h1v1h-1zM549 342h1v1h-1zM551 342h1v1h-1zM553 342h1v1h-1zM555 342h1v1h-1zM557 342h1v1h-1zM559 342h1v1h-1zM561 17h1v1h-1zM561 19h1v1h-1zM561 82h1v1h-1zM561 147h1v1h-1zM561 212h1v1h-1zM561 277h1v1h-1zM561 339h1v1h-1zM561 341h1v1h-1zM561 342h1v1h-1zM561 343h1v1h-1zM561 345h1v1h-1zM561 407h1v1h-1zM561 472h1v1h-1zM561 537h1v1h-1zM561 602h1v1h-1zM561 665h1v1h-1zM561 667h1v1h-1zM563 342h1v1h-1zM565 342h1v1h-1zM567 342h1v1h-1zM569 342h1v1h-1zM571 342h1v1h-1zM573 342h1v1h-1zM575 342h1v1h-1zM577 342h1v1h-1zM579 342h1v1h-1zM581 17h1v1h-1zM581 19h1v1h-1zM581 82h1v1h-1zM581 147h1v1h-1zM581 212h1v1h-1zM581 277h1v1h-1zM581 339h1v1h-1zM581 341h1v1h-1zM581 342h1v1h-1zM581 343h1v1h-1zM581 345h1v1h-1zM581 407h1v1h-1zM581 472h1v1h-1zM581 537h1v1h-1zM581 602h1v1h-1zM581 665h1v1h-1zM581 667h1v1h-1zM583 342h1v1h-1zM585 342h1v1h-1zM587 342h1v1h-1zM589 342h1v1h-1zM591 342h1v1h-1zM593 342h1v1h-1zM595 342h1v1h-1zM597 342h1v1h-1zM599 342h1v1h-1zM601 17h1v1h-1zM601 19h1v1h-1zM601 82h1v1h-1zM601 147h1v1h-1zM601 212h1v1h-1zM601 277h1v1h-1zM601 339h1v1h-1zM601 341h1v1h-1zM601 342h1v1h-1zM601 343h1v1h-1zM601 345h1v1h-1zM601 407h1v1h-1zM601 472h1v1h-1zM601 537h1v1h-1zM601 602h1v1h-1zM601 665h1v1h-1zM601 667h1v1h-1zM603 342h1v1h-1zM605 342h1v1h-1zM607 342h1v1h-1zM609 342h1v1h-1zM611 342h1v1h-1zM613 342h1v1h-1zM615 342h1v1h-1zM617 342h1v1h-1zM619 342h1v1h-1zM621 18h1v1h-1zM621 20h1v1h-1zM621 22h1v1h-1zM621 30h1v1h-1zM621 43h1v1h-1zM621 56h1v1h-1zM621 69h1v1h-1zM621 82h1v1h-1zM621 95h1v1h-1zM621 108h1v1h-1zM621 121h1v1h-1zM621 134h1v1h-1zM621 147h1v1h-1zM621 160h1v1h-1zM621 173h1v1h-1zM621 186h1v1h-1zM621 199h1v1h-1zM621 212h1v1h-1zM621 225h1v1h-1zM621 238h1v1h-1zM621 251h1v1h-1zM621 264h1v1h-1zM621 277h1v1h-1zM621 290h1v1h-1zM621 303h1v1h-1zM621 316h1v1h-1zM621 329h1v1h-1zM621 336h1v1h-1zM621 338h1v1h-1zM621 340h1v1h-1zM621 342h1v1h-1zM621 344h1v1h-1zM621 346h1v1h-1zM621 348h1v1h-1zM621 355h1v1h-1zM621 368h1v1h-1zM621 381h1v1h-1zM621 394h1v1h-1zM621 407h1v1h-1zM621 420h1v1h-1zM621 433h1v1h-1zM621 446h1v1h-1zM621 459h1v1h-1zM621 472h1v1h-1zM621 485h1v1h-1zM621 498h1v1h-1zM621 511h1v1h-1zM621 524h1v1h-1zM621 537h1v1h-1zM621 550h1v1h-1zM621 563h1v1h-1zM621 576h1v1h-1zM621 589h1v1h-1zM621 602h1v1h-1zM621 615h1v1h-1zM621 628h1v1h-1zM621 641h1v1h-1zM621 654h1v1h-1zM621 662h1v1h-1zM621 664h1v1h-1zM621 666h1v1h-1zM623 342h1v1h-1zM625 342h1v1h-1zM627 342h1v1h-1zM629 342h1v1h-1zM631 342h1v1h-1zM633 342h1v1h-1zM635 342h1v1h-1zM637 342h1v1h-1zM639 342h1v1h-1zM641 17h1v1h-1zM641 19h1v1h-1zM641 82h1v1h-1zM641 147h1v1h-1zM641 212h1v1h-1zM641 277h1v1h-1zM641 339h1v1h-1zM641 341h1v1h-1zM641 342h1v1h-1zM641 343h1v1h-1zM641 345h1v1h-1zM641 407h1v1h-1zM641 472h1v1h-1zM641 537h1v1h-1zM641 602h1v1h-1zM641 665h1v1h-1zM641 667h1v1h-1zM643 342h1v1h-1zM645 342h1v1h-1zM647 342h1v1h-1zM649 342h1v1h-1zM651 342h1v1h-1zM653 342h1v1h-1zM655 342h1v1h-1zM657 342h1v1h-1zM659 342h1v1h-1zM661 17h1v1h-1zM661 19h1v1h-1zM661 82h1v1h-1zM661 147h1v1h-1zM661 212h1v1h-1zM661 277h1v1h-1zM661 339h1v1h-1zM661 341h1v1h-1zM661 342h1v1h-1zM661 343h1v1h-1zM661 345h1v1h-1zM661 407h1v1h-1zM661 472h1v1h-1zM661 537h1v1h-1zM661 602h1v1h-1zM661 665h1v1h-1zM661 667h1v1h-1zM663 342h1v1h-1zM665 342h1v1h-1zM667 342h1v1h-1zM669 342h1v1h-1zM671 342h1v1h-1zM673 342h1v1h-1zM675 342h1v1h-1zM677 342h1v1h-1zM679 342h1v1h-1zM681 17h1v1h-1zM681 19h1v1h-1zM681 82h1v1h-1zM681 147h1v1h-1zM681 212h1v1h-1zM681 277h1v1h-1zM681 339h1v1h-1zM681 341h1v1h-1zM681 342h1v1h-1zM681 343h1v1h-1zM681 345h1v1h-1zM681 407h1v1h-1zM681 472h1v1h-1zM681 537h1v1h-1zM681 602h1v1h-1zM681 665h1v1h-1zM681 667h1v1h-1zM683 342h1v1h-1zM685 342h1v1h-1zM687 342h1v1h-1zM689 342h1v1h-1zM691 342h1v1h-1zM693 342h1v1h-1zM695 342h1v1h-1zM697 342h1v1h-1zM699 342h1v1h-1zM701 17h1v1h-1zM701 19h1v1h-1zM701 82h1v1h-1zM701 147h1v1h-1zM701 212h1v1h-1zM701 277h1v1h-1zM701 339h1v1h-1zM701 341h1v1h-1zM701 342h1v1h-1zM701 343h1v1h-1zM701 345h1v1h-1zM701 407h1v1h-1zM701 472h1v1h-1zM701 537h1v1h-1zM701 602h1v1h-1zM701 665h1v1h-1zM701 667h1v1h-1zM703 342h1v1h-1zM705 342h1v1h-1zM707 342h1v1h-1zM709 342h1v1h-1zM711 342h1v1h-1zM713 342h1v1h-1zM715 342h1v1h-1zM717 342h1v1h-1zM719 342h1v1h-1zM721 18h1v1h-1zM721 20h1v1h-1zM721 22h1v1h-1zM721 30h1v1h-1zM721 43h1v1h-1zM721 56h1v1h-1zM721 69h1v1h-1zM721 82h1v1h-1zM721 95h1v1h-1zM721 108h1v1h-1zM721 121h1v1h-1zM721 134h1v1h-1zM721 147h1v1h-1zM721 160h1v1h-1zM721 173h1v1h-1zM721 186h1v1h-1zM721 199h1v1h-1zM721 212h1v1h-1zM721 225h1v1h-1zM721 238h1v1h-1zM721 251h1v1h-1zM721 264h1v1h-1zM721 277h1v1h-1zM721 290h1v1h-1zM721 303h1v1h-1zM721 316h1v1h-1zM721 329h1v1h-1zM721 336h1v1h-1zM721 338h1v1h-1zM721 340h1v1h-1zM721 342h1v1h-1zM721 344h1v1h-1zM721 346h1v1h-1zM721 348h1v1h-1zM721 355h1v1h-1zM721 368h1v1h-1zM721 381h1v1h-1zM721 394h1v1h-1zM721 407h1v1h-1zM721 420h1v1h-1zM721 433h1v1h-1zM721 446h1v1h-1zM721 459h1v1h-1zM721 472h1v1h-1zM721 485h1v1h-1zM721 498h1v1h-1zM721 511h1v1h-1zM721 524h1v1h-1zM721 537h1v1h-1zM721 550h1v1h-1zM721 563h1v1h-1zM721 576h1v1h-1zM721 589h1v1h-1zM721 602h1v1h-1zM721 615h1v1h-1zM721 628h1v1h-1zM721 641h1v1h-1zM721 654h1v1h-1zM721 662h1v1h-1zM721 664h1v1h-1zM721 666h1v1h-1zM723 342h1v1h-1zM725 342h1v1h-1zM727 342h1v1h-1zM729 342h1v1h-1zM731 342h1v1h-1zM733 342h1v1h-1zM735 342h1v1h-1zM737 342h1v1h-1zM739 342h1v1h-1zM741 17h1v1h-1zM741 19h1v1h-1zM741 82h1v1h-1zM741 147h1v1h-1zM741 212h1v1h-1zM741 277h1v1h-1zM741 339h1v1h-1zM741 341h1v1h-1zM741 342h1v1h-1zM741 343h1v1h-1zM741 345h1v1h-1zM741 407h1v1h-1zM741 472h1v1h-1zM741 537h1v1h-1zM741 602h1v1h-1zM741 665h1v1h-1zM741 667h1v1h-1zM743 342h1v1h-1zM745 342h1v1h-1zM747 342h1v1h-1zM749 342h1v1h-1zM751 342h1v1h-1zM753 342h1v1h-1zM755 342h1v1h-1zM757 342h1v1h-1zM759 342h1v1h-1zM761 17h1v1h-1zM761 19h1v1h-1zM761 82h1v1h-1zM761 147h1v1h-1zM761 212h1v1h-1zM761 277h1v1h-1zM761 339h1v1h-1zM761 341h1v1h-1zM761 342h1v1h-1zM761 343h1v1h-1zM761 345h1v1h-1zM761 407h1v1h-1zM761 472h1v1h-1zM761 537h1v1h-1zM761 602h1v1h-1zM761 665h1v1h-1zM761 667h1v1h-1zM763 342h1v1h-1zM765 342h1v1h-1zM767 342h1v1h-1zM769 342h1v1h-1zM771 342h1v1h-1zM773 342h1v1h-1zM775 342h1v1h-1zM777 342h1v1h-1zM779 342h1v1h-1zM781 17h1v1h-1zM781 19h1v1h-1zM781 82h1v1h-1zM781 147h1v1h-1zM781 212h1v1h-1zM781 277h1v1h-1zM781 339h1v1h-1zM781 341h1v1h-1zM781 342h1v1h-1zM781 343h1v1h-1zM781 345h1v1h-1zM781 407h1v1h-1zM781 472h1v1h-1zM781 537h1v1h-1zM781 602h1v1h-1zM781 665h1v1h-1zM781 667h1v1h-1zM783 342h1v1h-1zM785 342h1v1h-1zM787 342h1v1h-1zM789 342h1v1h-1zM791 342h1v1h-1zM793 342h1v1h-1zM795 342h1v1h-1zM797 342h1v1h-1zM799 342h1v1h-1zM801 17h1v1h-1zM801 19h1v1h-1zM801 82h1v1h-1zM801 147h1v1h-1zM801 212h1v1h-1zM801 277h1v1h-1zM801 339h1v1h-1zM801 341h1v1h-1zM801 342h1v1h-1zM801 343h1v1h-1zM801 345h1v1h-1zM801 407h1v1h-1zM801 472h1v1h-1zM801 537h1v1h-1zM801 602h1v1h-1zM801 665h1v1h-1zM801 667h1v1h-1zM803 342h1v1h-1zM805 342h1v1h-1zM807 342h1v1h-1zM809 342h1v1h-1zM811 342h1v1h-1zM813 342h1v1h-1zM815 342h1v1h-1zM817 342h1v1h-1zM819 342h1v1h-1zM821 18h1v1h-1zM821 20h1v1h-1zM821 22h1v1h-1zM821 30h1v1h-1zM821 43h1v1h-1zM821 56h1v1h-1zM821 69h1v1h-1zM821 82h1v1h-1zM821 95h1v1h-1zM821 108h1v1h-1zM821 121h1v1h-1zM821 134h1v1h-1zM821 147h1v1h-1zM821 160h1v1h-1zM821 173h1v1h-1zM821 186h1v1h-1zM821 199h1v1h-1zM821 212h1v1h-1zM821 225h1v1h-1zM821 238h1v1h-1zM821 251h1v1h-1zM821 264h1v1h-1zM821 277h1v1h-1zM821 290h1v1h-1zM821 303h1v1h-1zM821 316h1v1h-1zM821 329h1v1h-1zM821 336h1v1h-1zM821 338h1v1h-1zM821 340h1v1h-1zM821 342h1v1h-1zM821 344h1v1h-1zM821 346h1v1h-1zM821 348h1v1h-1zM821 355h1v1h-1zM821 368h1v1h-1zM821 381h1v1h-1zM821 394h1v1h-1zM821 407h1v1h-1zM821 420h1v1h-1zM821 433h1v1h-1zM821 446h1v1h-1zM821 459h1v1h-1zM821 472h1v1h-1zM821 485h1v1h-1zM821 498h1v1h-1zM821 511h1v1h-1zM821 524h1v1h-1zM821 537h1v1h-1zM821 550h1v1h-1zM821 563h1v1h-1zM821 576h1v1h-1zM821 589h1v1h-1zM821 602h1v1h-1zM821 615h1v1h-1zM821 628h1v1h-1zM821 641h1v1h-1zM821 654h1v1h-1zM821 662h1v1h-1zM821 664h1v1h-1zM821 666h1v1h-1zM823 342h1v1h-1zM825 342h1v1h-1zM827 342h1v1h-1zM829 342h1v1h-1zM831 342h1v1h-1zM833 342h1v1h-1zM835 342h1v1h-1zM837 342h1v1h-1zM839 342h1v1h-1zM841 17h1v1h-1zM841 19h1v1h-1zM841 82h1v1h-1zM841 147h1v1h-1zM841 212h1v1h-1zM841 277h1v1h-1zM841 339h1v1h-1zM841 341h1v1h-1zM841 342h1v1h-1zM841 343h1v1h-1zM841 345h1v1h-1zM841 407h1v1h-1zM841 472h1v1h-1zM841 537h1v1h-1zM841 602h1v1h-1zM841 665h1v1h-1zM841 667h1v1h-1zM843 342h1v1h-1zM845 342h1v1h-1zM847 342h1v1h-1zM849 342h1v1h-1zM851 342h1v1h-1zM853 342h1v1h-1zM855 342h1v1h-1zM857 342h1v1h-1zM859 342h1v1h-1zM861 17h1v1h-1zM861 19h1v1h-1zM861 82h1v1h-1zM861 147h1v1h-1zM861 212h1v1h-1zM861 277h1v1h-1zM861 339h1v1h-1zM861 341h1v1h-1zM861 342h1v1h-1zM861 343h1v1h-1zM861 345h1v1h-1zM861 407h1v1h-1zM861 472h1v1h-1zM861 537h1v1h-1zM861 602h1v1h-1zM861 665h1v1h-1zM861 667h1v1h-1zM863 342h1v1h-1zM865 342h1v1h-1zM867 342h1v1h-1zM869 342h1v1h-1zM871 342h1v1h-1zM873 342h1v1h-1zM875 342h1v1h-1zM877 342h1v1h-1zM879 342h1v1h-1zM881 17h1v1h-1zM881 19h1v1h-1zM881 82h1v1h-1zM881 147h1v1h-1zM881 212h1v1h-1zM881 277h1v1h-1zM881 339h1v1h-1zM881 341h1v1h-1zM881 342h1v1h-1zM881 343h1v1h-1zM881 345h1v1h-1zM881 407h1v1h-1zM881 472h1v1h-1zM881 537h1v1h-1zM881 602h1v1h-1zM881 665h1v1h-1zM881 667h1v1h-1zM883 342h1v1h-1zM885 342h1v1h-1zM887 342h1v1h-1zM889 342h1v1h-1zM891 342h1v1h-1zM893 342h1v1h-1zM895 342h1v1h-1zM897 342h1v1h-1zM899 342h1v1h-1zM901 17h1v1h-1zM901 19h1v1h-1zM901 82h1v1h-1zM901 147h1v1h-1zM901 212h1v1h-1zM901 277h1v1h-1zM901 339h1v1h-1zM901 341h1v1h-1zM901 342h1v1h-1zM901 343h1v1h-1zM901 345h1v1h-1zM901 407h1v1h-1zM901 472h1v1h-1zM901 537h1v1h-1zM901 602h1v1h-1zM901 665h1v1h-1zM901 667h1v1h-1zM903 342h1v1h-1zM905 342h1v1h-1zM907 342h1v1h-1zM909 342h1v1h-1zM911 342h1v1h-1zM913 342h1v1h-1zM915 342h1v1h-1zM917 342h1v1h-1zM919 342h1v1h-1zM921 18h1v1h-1zM921 20h1v1h-1zM921 22h1v1h-1zM921 30h1v1h-1zM921 43h1v1h-1zM921 56h1v1h-1zM921 69h1v1h-1zM921 82h1v1h-1zM921 95h1v1h-1zM921 108h1v1h-1zM921 121h1v1h-1zM921 134h1v1h-1zM921 147h1v1h-1zM921 160h1v1h-1zM921 173h1v1h-1zM921 186h1v1h-1zM921 199h1v1h-1zM921 212h1v1h-1zM921 225h1v1h-1zM921 238h1v1h-1zM921 251h1v1h-1zM921 264h1v1h-1zM921 277h1v1h-1zM921 290h1v1h-1zM921 303h1v1h-1zM921 316h1v1h-1zM921 329h1v1h-1zM921 336h1v1h-1zM921 338h1v1h-1zM921 340h1v1h-1zM921 342h1v1h-1zM921 344h1v1h-1zM921 346h1v1h-1zM921 348h1v1h-1zM921 355h1v1h-1zM921 368h1v1h-1zM921 381h1v1h-1zM921 394h1v1h-1zM921 407h1v1h-1zM921 420h1v1h-1zM921 433h1v1h-1zM921 446h1v1h-1zM921 459h1v1h-1zM921 472h1v1h-1zM921 485h1v1h-1zM921 498h1v1h-1zM921 511h1v1h-1zM921 524h1v1h-1zM921 537h1v1h-1zM921 550h1v1h-1zM921 563h1v1h-1zM921 576h1v1h-1zM921 589h1v1h-1zM921 602h1v1h-1zM921 615h1v1h-1zM921 628h1v1h-1zM921 641h1v1h-1zM921 654h1v1h-1zM921 662h1v1h-1zM921 664h1v1h-1zM921 666h1v1h-1zM923 342h1v1h-1zM925 342h1v1h-1zM927 342h1v1h-1zM929 342h1v1h-1zM931 342h1v1h-1zM933 342h1v1h-1zM935 342h1v1h-1zM937 342h1v1h-1zM939 342h1v1h-1zM941 17h1v1h-1zM941 19h1v1h-1zM941 82h1v1h-1zM941 147h1v1h-1zM941 212h1v1h-1zM941 277h1v1h-1zM941 339h1v1h-1zM941 341h1v1h-1zM941 342h1v1h-1zM941 343h1v1h-1zM941 345h1v1h-1zM941 407h1v1h-1zM941 472h1v1h-1zM941 537h1v1h-1zM941 602h1v1h-1zM941 665h1v1h-1zM941 667h1v1h-1zM943 342h1v1h-1zM945 342h1v1h-1zM947 342h1v1h-1zM949 342h1v1h-1zM951 342h1v1h-1zM953 342h1v1h-1zM955 342h1v1h-1zM957 342h1v1h-1zM959 342h1v1h-1zM961 17h1v1h-1zM961 19h1v1h-1zM961 82h1v1h-1zM961 147h1v1h-1zM961 212h1v1h-1zM961 277h1v1h-1zM961 339h1v1h-1zM961 341h1v1h-1zM961 342h1v1h-1zM961 343h1v1h-1zM961 345h1v1h-1zM961 407h1v1h-1zM961 472h1v1h-1zM961 537h1v1h-1zM961 602h1v1h-1zM961 665h1v1h-1zM961 667h1v1h-1zM963 342h1v1h-1zM965 342h1v1h-1zM967 342h1v1h-1zM969 342h1v1h-1zM971 342h1v1h-1zM973 342h1v1h-1zM975 342h1v1h-1zM977 342h1v1h-1zM979 342h1v1h-1zM981 17h1v1h-1zM981 19h1v1h-1zM981 82h1v1h-1zM981 147h1v1h-1zM981 212h1v1h-1zM981 277h1v1h-1zM981 339h1v1h-1zM981 341h1v1h-1zM981 342h1v1h-1zM981 343h1v1h-1zM981 345h1v1h-1zM981 407h1v1h-1zM981 472h1v1h-1zM981 537h1v1h-1zM981 602h1v1h-1zM981 665h1v1h-1zM981 667h1v1h-1zM983 342h1v1h-1zM985 342h1v1h-1zM987 342h1v1h-1zM989 342h1v1h-1zM991 342h1v1h-1zM993 342h1v1h-1zM995 342h1v1h-1zM997 342h1v1h-1zM999 342h1v1h-1zM1001 17h1v1h-1zM1001 19h1v1h-1zM1001 82h1v1h-1zM1001 147h1v1h-1zM1001 212h1v1h-1zM1001 277h1v1h-1zM1001 339h1v1h-1zM1001 341h1v1h-1zM1001 342h1v1h-1zM1001 343h1v1h-1zM1001 345h1v1h-1zM1001 407h1v1h-1zM1001 472h1v1h-1zM1001 537h1v1h-1zM1001 602h1v1h-1zM1001 665h1v1h-1zM1001 667h1v1h-1zM1003 342h1v1h-1zM1005 342h1v1h-1zM1007 342h1v1h-1zM1009 342h1v1h-1zM1011 342h1v1h-1zM1013 342h1v1h-1zM1015 82h1v1h-1zM1015 147h1v1h-1zM1015 212h1v1h-1zM1015 277h1v1h-1zM1015 342h1v1h-1zM1015 407h1v1h-1zM1015 472h1v1h-1zM1015 537h1v1h-1zM1015 602h1v1h-1zM1017 82h1v1h-1zM1017 147h1v1h-1zM1017 212h1v1h-1zM1017 277h1v1h-1zM1017 342h1v1h-1zM1017 407h1v1h-1zM1017 472h1v1h-1zM1017 537h1v1h-1zM1017 602h1v1h-1zM1018 30h1v1h-1zM1018 43h1v1h-1zM1018 56h1v1h-1zM1018 69h1v1h-1zM1018 95h1v1h-1zM1018 108h1v1h-1zM1018 121h1v1h-1zM1018 134h1v1h-1zM1018 160h1v1h-1zM1018 173h1v1h-1zM1018 186h1v1h-1zM1018 199h1v1h-1zM1018 225h1v1h-1zM1018 238h1v1h-1zM1018 251h1v1h-1zM1018 264h1v1h-1zM1018 290h1v1h-1zM1018 303h1v1h-1zM1018 316h1v1h-1zM1018 329h1v1h-1zM1018 355h1v1h-1zM1018 368h1v1h-1zM1018 381h1v1h-1zM1018 394h1v1h-1zM1018 420h1v1h-1zM1018 433h1v1h-1zM1018 446h1v1h-1zM1018 459h1v1h-1zM1018 485h1v1h-1zM1018 498h1v1h-1zM1018 511h1v1h-1zM1018 524h1v1h-1zM1018 550h1v1h-1zM1018 563h1v1h-1zM1018 576h1v1h-1zM1018 589h1v1h-1zM1018 615h1v1h-1zM1018 628h1v1h-1zM1018 641h1v1h-1zM1018 654h1v1h-1zM1019 82h1v1h-1zM1019 147h1v1h-1zM1019 212h1v1h-1zM1019 277h1v1h-1zM1019 342h1v1h-1zM1019 407h1v1h-1zM1019 472h1v1h-1zM1019 537h1v1h-1zM1019 602h1v1h-1zM1020 30h1v1h-1zM1020 43h1v1h-1zM1020 56h1v1h-1zM1020 69h1v1h-1zM1020 95h1v1h-1zM1020 108h1v1h-1zM1020 121h1v1h-1zM1020 134h1v1h-1zM1020 160h1v1h-1zM1020 173h1v1h-1zM1020 186h1v1h-1zM1020 199h1v1h-1zM1020 225h1v1h-1zM1020 238h1v1h-1zM1020 251h1v1h-1zM1020 264h1v1h-1zM1020 290h1v1h-1zM1020 303h1v1h-1zM1020 316h1v1h-1zM1020 329h1v1h-1zM1020 355h1v1h-1zM1020 368h1v1h-1zM1020 381h1v1h-1zM1020 394h1v1h-1zM1020 420h1v1h-1zM1020 433h1v1h-1zM1020 446h1v1h-1zM1020 459h1v1h-1zM1020 485h1v1h-1zM1020 498h1v1h-1zM1020 511h1v1h-1zM1020 524h1v1h-1zM1020 550h1v1h-1zM1020 563h1v1h-1zM1020 576h1v1h-1zM1020 589h1v1h-1zM1020 615h1v1h-1zM1020 628h1v1h-1zM1020 641h1v1h-1zM1020 654h1v1h-1z"/><path fill="#5590c6" d="M20 16h1002v1h-1002z M20 668h1002v1h-1002z M20 16h1v653h-1z M1021 16h1v653h-1z"/><path fill="#5590c6" d="M121 0h800v1h-800z M121 15h800v1h-800z M121 0h1v16h-1z M920 0h1v16h-1z"/><rect x="282" y="7" width="479" height="1" fill="#00a000"/><g shape-rendering="geometricPrecision" text-rendering="geometricPrecision"><text transform="translate(-0.5 15) scale(0.9522 1)" font-family="Liberation Serif, sans-serif" font-size="21" font-weight="bold" fill="#f4f4ff" text-anchor="start" textLength="33.08" lengthAdjust="spacing" >Tek</text><text transform="translate(35.5 12.8) scale(1.1000 1)" font-family="Liberation Sans, sans-serif" font-size="14.5" fill="#f4f4ff" text-anchor="start" textLength="27.27" lengthAdjust="spacing"  stroke="#f4f4ff" stroke-width="0.3">Run</text><text transform="translate(924.8 13) scale(1.1300 1)" font-family="Liberation Sans, sans-serif" font-size="14.5" fill="#f4f4ff" text-anchor="start" textLength="35.04" lengthAdjust="spacing"  stroke="#f4f4ff" stroke-width="0.3">Trig?</text><path d="M0.6 73.8H12.6L19.8 81.5L12.6 89.2H0.6z" fill="none" stroke="#f23cf2" stroke-width="1.5"/><text transform="translate(3.4 86.9) scale(1.0069 1)" font-family="Liberation Sans, sans-serif" font-size="15" fill="#c800c8" text-anchor="start" textLength="8.34" lengthAdjust="spacing" stroke="#c800c8" stroke-width="0.6">3</text><path d="M0.6 594.8H12.6L19.8 602.5L12.6 610.2H0.6z" fill="none" stroke="#00f0f0" stroke-width="1.5"/><text transform="translate(3.4 607.9) scale(1.0069 1)" font-family="Liberation Sans, sans-serif" font-size="15" fill="#00e8e8" text-anchor="start" textLength="8.34" lengthAdjust="spacing" stroke="#00e8e8" stroke-width="0.6">2</text><path d="M0 655.5H12.8L20.3 663.5L12.8 671.5H0z" fill="#00a400"/><path d="M0 656H12.6L14 657.4" fill="none" stroke="#30d030" stroke-width="1.4"/><text transform="translate(3.2 669.2) scale(1.0548 1)" font-family="Liberation Sans, sans-serif" font-size="15" font-weight="bold" fill="#000" text-anchor="start" textLength="8.34" lengthAdjust="spacing" stroke="#000" stroke-width="0.5">4</text><path d="M115 25.2Q115 24 116.2 24H125.8Q127 24 127 25.2V35.5L121 39.6L115 35.5z" fill="#ffa000"/><path d="M116 25h10v2h-4v9h-2v-9h-4z" fill="#000" shape-rendering="crispEdges"/><g shape-rendering="crispEdges"><path fill="#ffa000" d="M515 5h4v9h4v2h-8z"/><rect x="516" y="6" width="3" height="1" fill="#000"/><rect x="518" y="6" width="1" height="8" fill="#000"/><rect x="519" y="1" width="5" height="14" fill="#fff"/><rect x="521" y="3" width="1" height="10" fill="#ffa000"/><rect x="521" y="6" width="1" height="1" fill="#000"/><rect x="518" y="1" width="1" height="1" fill="#ffa000"/><rect x="524" y="1" width="1" height="1" fill="#ffa000"/></g><path fill="#ffa000" d="M515.8 17h11.4l-5.7 6.4z"/><rect x="20.5" y="670.5" width="554" height="20" rx="5.5" ry="5.5" fill="#000400" stroke="#d4d4d4" stroke-width="1"/><rect x="582.5" y="670.5" width="147" height="37" rx="5.5" ry="5.5" fill="#000400" stroke="#d4d4d4" stroke-width="1"/><rect x="737.5" y="670.5" width="106" height="37" rx="5.5" ry="5.5" fill="#000400" stroke="#d4d4d4" stroke-width="1"/><rect x="851.5" y="670.5" width="170" height="38" rx="5.5" ry="5.5" fill="#000400" stroke="#d4d4d4" stroke-width="1"/><rect x="909.5" y="729.5" width="112" height="36" rx="5.5" ry="5.5" fill="#000400" stroke="#d4d4d4" stroke-width="1"/><rect x="165" y="673" width="25.5" height="16" rx="8.0" ry="8.0" fill="#00e4e8"/><text transform="translate(177.75 686.1) scale(1.0309 1)" font-family="Liberation Sans, sans-serif" font-size="15" fill="#000" text-anchor="middle" textLength="8.34" lengthAdjust="spacing" stroke="#000" stroke-width="0.5">2</text><path d="M200.5 675.5V685.5M197.5 682.4L200.5 685.6L203.5 682.4" fill="none" stroke="#00e4e8" stroke-width="1.6"/><text transform="translate(208.6 685.6) scale(1.1300 1)" font-family="Liberation Sans, sans-serif" font-size="14.5" fill="#00e4e8" text-anchor="start" textLength="46.55" lengthAdjust="spacing"  stroke="#00e4e8" stroke-width="0.3">100mV</text><text transform="translate(269 685.6) scale(1.0701 1)" font-family="Liberation Sans, sans-serif" font-size="14.5" fill="#00e4e8" text-anchor="start" textLength="10.84" lengthAdjust="spacing"  stroke="#00e4e8" stroke-width="0.3">Ω</text><text transform="translate(283 681.7) scale(0.7662 1)" font-family="Liberation Sans, sans-serif" font-size="9" fill="#00e4e8" text-anchor="start" textLength="6.00" lengthAdjust="spacing"  stroke="#00e4e8" stroke-width="0.3">B</text><text transform="translate(287.2 685.6) scale(0.6593 1)" font-family="Liberation Sans, sans-serif" font-size="9" fill="#00e4e8" text-anchor="start" textLength="8.49" lengthAdjust="spacing"  stroke="#00e4e8" stroke-width="0.3">W</text><rect x="303.5" y="673" width="26.0" height="16" rx="8.0" ry="8.0" fill="#ba10c2"/><text transform="translate(316.5 686.1) scale(1.0309 1)" font-family="Liberation Sans, sans-serif" font-size="15" fill="#000" text-anchor="middle" textLength="8.34" lengthAdjust="spacing" stroke="#000" stroke-width="0.5">3</text><text transform="translate(346 685.6) scale(1.1300 1)" font-family="Liberation Sans, sans-serif" font-size="14.5" fill="#c400c4" text-anchor="start" textLength="53.98" lengthAdjust="spacing"  stroke="#c400c4" stroke-width="0.3">50.0mV</text><text transform="translate(408.5 685.6) scale(1.0701 1)" font-family="Liberation Sans, sans-serif" font-size="14.5" fill="#c400c4" text-anchor="start" textLength="10.84" lengthAdjust="spacing"  stroke="#c400c4" stroke-width="0.3">Ω</text><text transform="translate(422.3 681.7) scale(0.7662 1)" font-family="Liberation Sans, sans-serif" font-size="9" fill="#c400c4" text-anchor="start" textLength="6.00" lengthAdjust="spacing"  stroke="#c400c4" stroke-width="0.3">B</text><text transform="translate(426.5 685.6) scale(0.6593 1)" font-family="Liberation Sans, sans-serif" font-size="9" fill="#c400c4" text-anchor="start" textLength="8.49" lengthAdjust="spacing"  stroke="#c400c4" stroke-width="0.3">W</text><rect x="443" y="673" width="25.5" height="16" rx="8.0" ry="8.0" fill="#00b000"/><text transform="translate(455.75 686.1) scale(1.0309 1)" font-family="Liberation Sans, sans-serif" font-size="15" fill="#000" text-anchor="middle" textLength="8.34" lengthAdjust="spacing" stroke="#000" stroke-width="0.5">4</text><path d="M478.3 675.5V685.5M475.3 682.4L478.3 685.6L481.3 682.4" fill="none" stroke="#00b000" stroke-width="1.6"/><text transform="translate(486.2 685.6) scale(1.1300 1)" font-family="Liberation Sans, sans-serif" font-size="14.5" fill="#00b000" text-anchor="start" textLength="53.98" lengthAdjust="spacing"  stroke="#00b000" stroke-width="0.3">50.0mV</text><text transform="translate(547.8 685.6) scale(1.0701 1)" font-family="Liberation Sans, sans-serif" font-size="14.5" fill="#00b000" text-anchor="start" textLength="10.84" lengthAdjust="spacing"  stroke="#00b000" stroke-width="0.3">Ω</text><text transform="translate(561 681.7) scale(0.7662 1)" font-family="Liberation Sans, sans-serif" font-size="9" fill="#00b000" text-anchor="start" textLength="6.00" lengthAdjust="spacing"  stroke="#00b000" stroke-width="0.3">B</text><text transform="translate(565.2 685.6) scale(0.6593 1)" font-family="Liberation Sans, sans-serif" font-size="9" fill="#00b000" text-anchor="start" textLength="8.49" lengthAdjust="spacing"  stroke="#00b000" stroke-width="0.3">W</text><text transform="translate(587.2 685.6) scale(1.1300 1)" font-family="Liberation Sans, sans-serif" font-size="14.5" fill="#f4f4ff" text-anchor="start" textLength="42.83" lengthAdjust="spacing"  stroke="#f4f4ff" stroke-width="0.3">400ns</text><rect x="587" y="691" width="12.3" height="13" rx="2.2" ry="2.2" fill="#ffa000"/><path d="M588.3 692.3h9.8v1.8h-3.9v8.8h-2.1v-8.8h-3.8z" fill="#000"/><path d="M600.3 697.5H606" fill="none" stroke="#ffa000" stroke-width="1.5"/><path d="M604.8 693.6L609.2 697.5L604.8 701.4z" fill="#ffa000"/><path d="M610 694h11.4l-5.7 6.4z" fill="#ffa000"/><text transform="translate(622.2 702.7) scale(1.1300 1)" font-family="Liberation Sans, sans-serif" font-size="14.5" fill="#ffa000" text-anchor="start" textLength="83.72" lengthAdjust="spacing"  stroke="#ffa000" stroke-width="0.3">1.600000µs</text><text transform="translate(743.2 685.6) scale(1.1300 1)" font-family="Liberation Sans, sans-serif" font-size="14.5" fill="#f4f4ff" text-anchor="start" textLength="63.54" lengthAdjust="spacing"  stroke="#f4f4ff" stroke-width="0.3">2.50GS/s</text><text transform="translate(743.6 702.7) scale(1.1300 1)" font-family="Liberation Sans, sans-serif" font-size="14.5" fill="#f4f4ff" text-anchor="start" textLength="70.80" lengthAdjust="spacing"  stroke="#f4f4ff" stroke-width="0.3">1M points</text><rect x="882" y="673" width="25.5" height="16" rx="8.0" ry="8.0" fill="#f2f200"/><text transform="translate(894.75 686.1) scale(0.9110 1)" font-family="Liberation Sans, sans-serif" font-size="15" fill="#000" text-anchor="middle" textLength="8.34" lengthAdjust="spacing" stroke="#000" stroke-width="0.5">1</text><path d="M920 685.2H924.6L927.6 675.4H932.2" fill="none" stroke="#f4f4ff" stroke-width="2"/><text transform="translate(965.6 685.6) scale(1.1300 1)" font-family="Liberation Sans, sans-serif" font-size="14.5" fill="#f4f4ff" text-anchor="start" textLength="44.78" lengthAdjust="spacing"  stroke="#f4f4ff" stroke-width="0.3">3.60 V</text><text transform="translate(915 745.8) scale(1.1300 1)" font-family="Liberation Sans, sans-serif" font-size="14.5" fill="#f4f4ff" text-anchor="start" textLength="89.82" lengthAdjust="spacing"  stroke="#f4f4ff" stroke-width="0.3">23 Jun 2023</text><text transform="translate(915 761.8) scale(1.1300 1)" font-family="Liberation Sans, sans-serif" font-size="14.5" fill="#f4f4ff" text-anchor="start" textLength="62.83" lengthAdjust="spacing"  stroke="#f4f4ff" stroke-width="0.3">10:17:42</text><rect x="21" y="715" width="112" height="51.7" rx="2.8" ry="2.8" fill="#505250" stroke="#686a68" stroke-width="2"/><path d="M22.5 715H131.5" stroke="#848484" stroke-width="2" fill="none"/><path d="M22.5 767H131.5" stroke="#727272" stroke-width="2" fill="none"/><text transform="translate(77 737.6) scale(1.1165 1)" font-family="Liberation Sans, sans-serif" font-size="14.5" fill="#f4f4ff" text-anchor="middle" textLength="33.05" lengthAdjust="spacing"  stroke="#f4f4ff" stroke-width="0.3">Save</text><text transform="translate(77 754.6) scale(1.1300 1)" font-family="Liberation Sans, sans-serif" font-size="14.5" fill="#f4f4ff" text-anchor="middle" textLength="94.16" lengthAdjust="spacing"  stroke="#f4f4ff" stroke-width="0.3">Screen Image</text><rect x="139" y="715" width="112" height="51.7" rx="2.8" ry="2.8" fill="#505250" stroke="#686a68" stroke-width="2"/><path d="M140.5 715H249.5" stroke="#848484" stroke-width="2" fill="none"/><path d="M140.5 767H249.5" stroke="#727272" stroke-width="2" fill="none"/><text transform="translate(195 737.6) scale(1.1165 1)" font-family="Liberation Sans, sans-serif" font-size="14.5" fill="#f4f4ff" text-anchor="middle" textLength="33.05" lengthAdjust="spacing"  stroke="#f4f4ff" stroke-width="0.3">Save</text><text transform="translate(195 754.6) scale(1.1300 1)" font-family="Liberation Sans, sans-serif" font-size="14.5" fill="#f4f4ff" text-anchor="middle" textLength="71.15" lengthAdjust="spacing"  stroke="#f4f4ff" stroke-width="0.3">Waveform</text><rect x="257" y="715" width="112" height="51.7" rx="2.8" ry="2.8" fill="#505250" stroke="#686a68" stroke-width="2"/><path d="M258.5 715H367.5" stroke="#848484" stroke-width="2" fill="none"/><path d="M258.5 767H367.5" stroke="#727272" stroke-width="2" fill="none"/><text transform="translate(313 737.6) scale(1.1165 1)" font-family="Liberation Sans, sans-serif" font-size="14.5" fill="#f4f4ff" text-anchor="middle" textLength="33.05" lengthAdjust="spacing"  stroke="#f4f4ff" stroke-width="0.3">Save</text><text transform="translate(313 754.6) scale(1.1300 1)" font-family="Liberation Sans, sans-serif" font-size="14.5" fill="#f4f4ff" text-anchor="middle" textLength="42.48" lengthAdjust="spacing"  stroke="#f4f4ff" stroke-width="0.3">Setup</text><rect x="375" y="715" width="112" height="51.7" rx="2.8" ry="2.8" fill="#505250" stroke="#686a68" stroke-width="2"/><path d="M376.5 715H485.5" stroke="#848484" stroke-width="2" fill="none"/><path d="M376.5 767H485.5" stroke="#727272" stroke-width="2" fill="none"/><text transform="translate(431 737.6) scale(1.1300 1)" font-family="Liberation Sans, sans-serif" font-size="14.5" fill="#f4f4ff" text-anchor="middle" textLength="40.53" lengthAdjust="spacing"  stroke="#f4f4ff" stroke-width="0.3">Recall</text><text transform="translate(431 754.6) scale(1.1300 1)" font-family="Liberation Sans, sans-serif" font-size="14.5" fill="#f4f4ff" text-anchor="middle" textLength="71.15" lengthAdjust="spacing"  stroke="#f4f4ff" stroke-width="0.3">Waveform</text><rect x="493" y="715" width="112" height="51.7" rx="2.8" ry="2.8" fill="#505250" stroke="#686a68" stroke-width="2"/><path d="M494.5 715H603.5" stroke="#848484" stroke-width="2" fill="none"/><path d="M494.5 767H603.5" stroke="#727272" stroke-width="2" fill="none"/><text transform="translate(549 737.6) scale(1.1300 1)" font-family="Liberation Sans, sans-serif" font-size="14.5" fill="#f4f4ff" text-anchor="middle" textLength="40.53" lengthAdjust="spacing"  stroke="#f4f4ff" stroke-width="0.3">Recall</text><text transform="translate(549 754.6) scale(1.1300 1)" font-family="Liberation Sans, sans-serif" font-size="14.5" fill="#f4f4ff" text-anchor="middle" textLength="42.48" lengthAdjust="spacing"  stroke="#f4f4ff" stroke-width="0.3">Setup</text><rect x="611" y="715" width="112" height="51.7" rx="2.8" ry="2.8" fill="#505250" stroke="#686a68" stroke-width="2"/><path d="M612.5 715H721.5" stroke="#848484" stroke-width="2" fill="none"/><path d="M612.5 767H721.5" stroke="#727272" stroke-width="2" fill="none"/><text transform="translate(667 729.4) scale(1.1300 1)" font-family="Liberation Sans, sans-serif" font-size="14.5" fill="#f4f4ff" text-anchor="middle" textLength="48.14" lengthAdjust="spacing"  stroke="#f4f4ff" stroke-width="0.3">Assign</text><path d="M646 733.2H672.6V747.5H646A7.1 7.1 0 0 1 646 733.2z" fill="#fafafa"/><path d="M643 746.4Q644.6 747.1 646.5 747.1H673.2V734.2" fill="none" stroke="#8c8c8c" stroke-width="1.2"/><text transform="translate(656 743.8) scale(1.1132 1)" font-family="Liberation Sans, sans-serif" font-size="10" font-weight="bold" fill="#000" text-anchor="middle" textLength="23.36" lengthAdjust="spacing" stroke="#000" stroke-width="0.25">Save</text><text transform="translate(679.6 746) scale(1.1300 1)" font-family="Liberation Sans, sans-serif" font-size="14.5" fill="#f4f4ff" text-anchor="start" textLength="13.72" lengthAdjust="spacing"  stroke="#f4f4ff" stroke-width="0.3">to</text><rect x="641" y="750" width="52" height="16" fill="#1480ff"/><text transform="translate(667 762.4) scale(1.1300 1)" font-family="Liberation Sans, sans-serif" font-size="14.5" fill="#f4f4ff" text-anchor="middle" textLength="42.12" lengthAdjust="spacing"  stroke="#f4f4ff" stroke-width="0.3">Image</text><rect x="729" y="715" width="112" height="51.7" rx="2.8" ry="2.8" fill="#505250" stroke="#686a68" stroke-width="2"/><path d="M730.5 715H839.5" stroke="#848484" stroke-width="2" fill="none"/><path d="M730.5 767H839.5" stroke="#727272" stroke-width="2" fill="none"/><text transform="translate(785 737.6) scale(1.1300 1)" font-family="Liberation Sans, sans-serif" font-size="14.5" fill="#f4f4ff" text-anchor="middle" textLength="24.78" lengthAdjust="spacing"  stroke="#f4f4ff" stroke-width="0.3">File</text><text transform="translate(785 754.6) scale(1.1300 1)" font-family="Liberation Sans, sans-serif" font-size="14.5" fill="#f4f4ff" text-anchor="middle" textLength="55.40" lengthAdjust="spacing"  stroke="#f4f4ff" stroke-width="0.3">Utilities</text></g></svg>
</body></html>
